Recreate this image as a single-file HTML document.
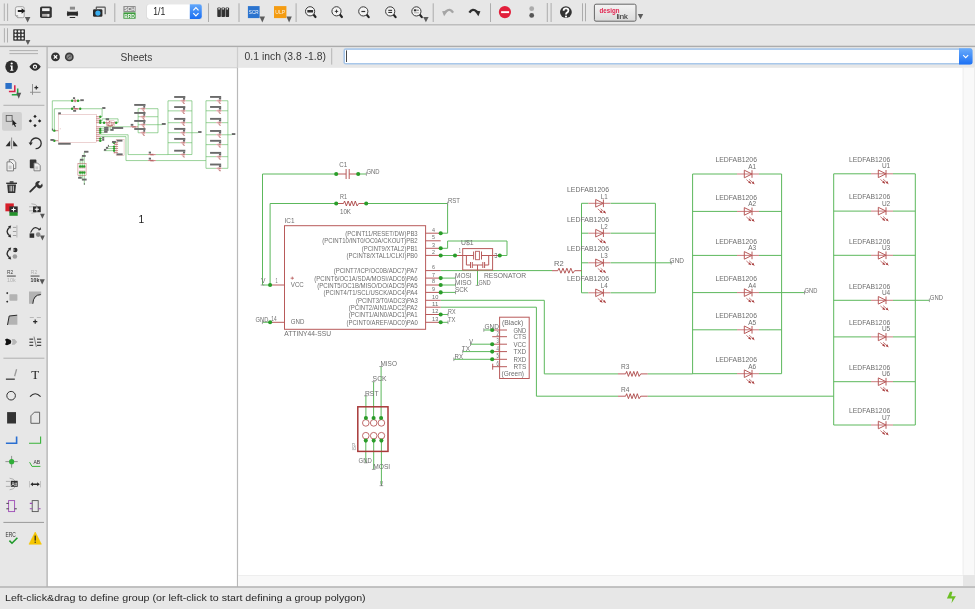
<!DOCTYPE html><html><head><meta charset="utf-8"><style>html,body{margin:0;padding:0;width:975px;height:609px;overflow:hidden;background:#e7e7e7}svg{display:block;font-family:"Liberation Sans",sans-serif;will-change:transform}</style></head><body>
<svg width="975" height="609" viewBox="0 0 975 609">
<rect x="0" y="0" width="975" height="609" fill="#e7e7e7"/>
<rect x="0" y="24.1" width="975" height="1.6" fill="#bababa"/><rect x="0" y="25.7" width="975" height="0.8" fill="#ececec"/>
<rect x="0" y="45.7" width="975" height="1.4" fill="#acacac"/>
<rect x="46.4" y="47" width="1.4" height="540" fill="#b8b8b8"/>
<rect x="48" y="68.2" width="189" height="518" fill="#ffffff"/>
<rect x="48" y="67" width="189" height="1.2" fill="#d8d8d8"/>
<rect x="236.9" y="47" width="1.2" height="21" fill="#cdcdcd"/>
<rect x="236.9" y="68" width="1.3" height="519" fill="#b9b9b9"/>
<rect x="238.2" y="67.8" width="736.8" height="518.5" fill="#ffffff"/>
<rect x="238.2" y="575.4" width="725" height="11" fill="#f8f8f8"/>
<rect x="238.2" y="575" width="725" height="0.9" fill="#ececec"/>
<rect x="963" y="67.8" width="12" height="519" fill="#f9f9f9"/>
<rect x="962.6" y="67.8" width="0.9" height="507" fill="#ebebeb"/>
<rect x="963" y="575" width="12" height="11.3" fill="#e6e6e6"/>
<rect x="974" y="67.8" width="1" height="507" fill="#ececec"/>
<rect x="0" y="586.3" width="975" height="1.4" fill="#b0b0b0"/>
<rect x="3.8" y="3.5" width="1" height="17.5" fill="#b0b0b0"/>
<rect x="7.1" y="3.5" width="1" height="17.5" fill="#b0b0b0"/>
<path d="M17.2 6.7 H22.6 Q24.2 6.7 24.2 8.3 V16.2 Q24.2 17.7 22.7 17.7 H17.7 L15.4 15.5 V8.5 Q15.4 6.7 17.2 6.7 Z" fill="#f3f3f3" stroke="#9a9a9a" stroke-width="0.9"/>
<path d="M15.4 15.5 L17.7 15.5 L17.7 17.7" fill="none" stroke="#9a9a9a" stroke-width="0.8"/>
<path d="M17.8 10.1 H21.6 V8.3 L25.3 11 L21.6 13.7 V11.9 H17.8 Z" fill="#1e1e1e"/>
<path d="M24.9 17.1 H30.4 L27.65 22.6 Z" fill="#5c5c5c"/>
<rect x="40" y="6.4" width="11.8" height="11.6" rx="1.8" fill="#333"/>
<rect x="42.1" y="8.2" width="7.5" height="2.9" fill="#f2f2f2"/>
<rect x="42.1" y="13.9" width="7.5" height="2.7" fill="#b3b0ae"/>
<rect x="47.4" y="14.1" width="1.6" height="2.5" fill="#e4e4e4"/>
<rect x="69.9" y="6.7" width="5.1" height="2.9" fill="#8c8c8c"/>
<path d="M67.4 10.9 Q68.6 11.8 70 11.8 H75 Q76.4 11.8 77.6 10.9 Q78.6 13.6 77.6 16.3 Q76.4 15.4 75 15.4 H70 Q68.6 15.4 67.4 16.3 Q66.4 13.6 67.4 10.9 Z" fill="#2b2b2b"/>
<rect x="69.6" y="16.9" width="5.7" height="1.2" rx="0.5" fill="#2b2b2b"/>
<path d="M96.3 9 V7.6 Q96.3 7.2 96.7 7.2 H104.6 Q105.2 7.2 105.2 7.8 V14.3" fill="none" stroke="#555" stroke-width="1.2"/>
<rect x="93" y="9.2" width="9.4" height="7.6" rx="1.2" fill="#2a2a2a"/>
<circle cx="97.9" cy="13.1" r="2.6" fill="#3aaef0"/>
<rect x="114.3" y="3.3" width="1" height="18.7" fill="#acacac"/>
<rect x="123.4" y="6.1" width="12.2" height="5.8" fill="#858585"/>
<text x="129.5" y="11.2" font-size="6" fill="#fff" text-anchor="middle" font-weight="bold" textLength="10.6" lengthAdjust="spacingAndGlyphs">SCH</text>
<rect x="123.4" y="12.4" width="12.2" height="6.3" fill="#3c9b3c"/>
<text x="129.5" y="17.9" font-size="6" fill="#fff" text-anchor="middle" font-weight="bold" textLength="10.6" lengthAdjust="spacingAndGlyphs">BRD</text>
<rect x="146.6" y="3.9" width="55.5" height="15.4" rx="2.6" fill="#d2d2d2"/>
<rect x="147" y="4.2" width="54.8" height="14.7" rx="2.3" fill="#ffffff"/>
<defs><linearGradient id="blu" x1="0" y1="0" x2="0" y2="1"><stop offset="0" stop-color="#64a8fa"/><stop offset="1" stop-color="#1a6ef2"/></linearGradient></defs>
<path d="M189.8 4.2 H199.5 Q201.8 4.2 201.8 6.5 V16.6 Q201.8 18.9 199.5 18.9 H189.8 Z" fill="url(#blu)"/>
<path d="M193.3 10.4 L195.9 7.7 L198.5 10.4" fill="none" stroke="#fff" stroke-width="1.2"/>
<path d="M193.3 13.1 L195.9 15.8 L198.5 13.1" fill="none" stroke="#fff" stroke-width="1.2"/>
<text x="153.3" y="15.2" font-size="10.8" fill="#1a1a1a" textLength="11.9" lengthAdjust="spacingAndGlyphs">1/1</text>
<rect x="208" y="3.3" width="1" height="18.7" fill="#acacac"/>
<rect x="217.3" y="7.4" width="3.6" height="9.7" rx="1.2" fill="#333"/>
<rect x="218.4" y="8" width="1.4" height="1.6" fill="#ddd"/>
<rect x="221.4" y="7.4" width="3.6" height="9.7" rx="1.2" fill="#333"/>
<rect x="222.5" y="8" width="1.4" height="1.6" fill="#ddd"/>
<rect x="225.5" y="7.4" width="3.6" height="9.7" rx="1.2" fill="#333"/>
<rect x="226.6" y="8" width="1.4" height="1.6" fill="#ddd"/>
<rect x="238.5" y="3.3" width="1" height="18.7" fill="#acacac"/>
<rect x="247.9" y="6.1" width="11.7" height="12" fill="#2b74cf"/>
<text x="253.75" y="14.3" font-size="6" fill="#f2f6fc" text-anchor="middle" textLength="9.8" lengthAdjust="spacingAndGlyphs">SCR</text>
<path d="M259.6 16.6 H265 L262.3 22.4 Z" fill="#5c5c5c"/>
<rect x="274" y="6.1" width="12.4" height="12" fill="#f49c12"/>
<text x="280.2" y="14.3" font-size="6" fill="#fdf0dc" text-anchor="middle" textLength="9.8" lengthAdjust="spacingAndGlyphs">ULP</text>
<path d="M286.4 16.6 H291.8 L289.1 22.4 Z" fill="#5c5c5c"/>
<rect x="295.6" y="3.3" width="1" height="18.7" fill="#acacac"/>
<line x1="313.3" y1="14.3" x2="315.5" y2="17.0" stroke="#252525" stroke-width="2.2" stroke-linecap="round"/>
<circle cx="310.1" cy="11.3" r="4.6" fill="#f4f4f4" stroke="#3a3a3a" stroke-width="1"/>
<rect x="307.3" y="10.1" width="5.8" height="2.5" rx="0.5" fill="#2f2f2f"/>
<line x1="339.7" y1="14.3" x2="341.9" y2="17.0" stroke="#252525" stroke-width="2.2" stroke-linecap="round"/>
<circle cx="336.5" cy="11.3" r="4.6" fill="#f4f4f4" stroke="#3a3a3a" stroke-width="1"/>
<path d="M336.5 9.1 L337.1 10.7 L338.7 11.3 L337.1 11.9 L336.5 13.5 L335.9 11.9 L334.3 11.3 L335.9 10.7 Z" fill="#2f2f2f"/>
<line x1="366.5" y1="14.4" x2="368.7" y2="17.1" stroke="#252525" stroke-width="2.2" stroke-linecap="round"/>
<circle cx="363.3" cy="11.4" r="4.6" fill="#f4f4f4" stroke="#3a3a3a" stroke-width="1"/>
<rect x="361.4" y="10.9" width="3.8" height="1.2" fill="#2f2f2f"/>
<line x1="393.4" y1="14.4" x2="395.59999999999997" y2="17.1" stroke="#252525" stroke-width="2.2" stroke-linecap="round"/>
<circle cx="390.2" cy="11.4" r="4.6" fill="#f4f4f4" stroke="#3a3a3a" stroke-width="1"/>
<rect x="388.3" y="9.8" width="3.8" height="1.1" fill="#2f2f2f"/><rect x="388.3" y="11.9" width="3.8" height="1.1" fill="#2f2f2f"/>
<line x1="419.59999999999997" y1="14.4" x2="421.79999999999995" y2="17.1" stroke="#252525" stroke-width="2.2" stroke-linecap="round"/>
<circle cx="416.4" cy="11.4" r="4.6" fill="#f4f4f4" stroke="#3a3a3a" stroke-width="1"/>
<rect x="413.9" y="9.3" width="2.4" height="2" fill="#2f2f2f"/><rect x="416.5" y="9.6" width="2.4" height="1.3" fill="#8a8a8a"/><rect x="413.9" y="12.5" width="5" height="0.7" fill="#8a8a8a"/>
<path d="M423.2 16.9 H428.6 L425.9 22.3 Z" fill="#5c5c5c"/>
<rect x="432.7" y="3.3" width="1" height="18.7" fill="#acacac"/>
<path d="M469.4 12.6 Q472.4 7.6 476.8 11.6" fill="none" stroke="#2e2e2e" stroke-width="2.3"/>
<path d="M474.4 10.6 L480.4 11.2 L478.4 16.2 Z" fill="#2e2e2e"/>
<path d="M453.1 12.6 Q450.1 7.6 445.7 11.6" fill="none" stroke="#a5a5a5" stroke-width="2.3"/>
<path d="M448.1 10.6 L442.1 11.2 L444.1 16.2 Z" fill="#a5a5a5"/>
<rect x="490" y="3.3" width="1" height="18.7" fill="#acacac"/>
<circle cx="504.9" cy="12.1" r="6.1" fill="#e21f3b"/>
<rect x="501.1" y="11.2" width="8" height="1.9" fill="#fff"/>
<circle cx="531.7" cy="8.7" r="2.4" fill="#ababab"/>
<circle cx="531.7" cy="15.4" r="2.4" fill="#555"/>
<rect x="546.8" y="3" width="1" height="19" fill="#acacac"/>
<rect x="550.6" y="3" width="1" height="19" fill="#acacac"/>
<circle cx="565.9" cy="12.1" r="5.9" fill="#333"/>
<path d="M563.6 10.7 Q563.6 8.4 566 8.4 Q568.4 8.4 568.4 10.5 Q568.4 11.9 567 12.6 Q566 13.1 566 14.5" fill="none" stroke="#fff" stroke-width="1.8"/>
<circle cx="566" cy="16.6" r="1.05" fill="#fff"/>
<rect x="582" y="3.3" width="1" height="18" fill="#acacac"/>
<rect x="585" y="3.3" width="1" height="18" fill="#acacac"/>
<defs><linearGradient id="dl" x1="0" y1="0" x2="0" y2="1"><stop offset="0" stop-color="#f4f4f4"/><stop offset="1" stop-color="#dadada"/></linearGradient></defs>
<rect x="594.4" y="4.2" width="41.6" height="17" rx="1.6" fill="url(#dl)" stroke="#666" stroke-width="1"/>
<text x="599.6" y="13.4" font-size="8" font-weight="bold" fill="#e2234f" textLength="19.8" lengthAdjust="spacingAndGlyphs">design</text>
<text x="616.4" y="19.2" font-size="7" fill="#151515" textLength="11.6" lengthAdjust="spacingAndGlyphs">link</text>
<path d="M637.8 14 H643.2 L640.5 19.3 Z" fill="#5c5c5c"/>
<rect x="3.9" y="28.2" width="1" height="14.3" fill="#b0b0b0"/>
<rect x="7" y="28.2" width="1" height="14.3" fill="#b0b0b0"/>
<rect x="13.2" y="29.2" width="11.8" height="11.5" rx="0.6" fill="#3a3a3a"/>
<circle cx="15.6" cy="31.5" r="1.15" fill="#f4f4f4"/>
<circle cx="15.6" cy="35" r="1.15" fill="#f4f4f4"/>
<circle cx="15.6" cy="38.4" r="1.15" fill="#f4f4f4"/>
<circle cx="19.1" cy="31.5" r="1.15" fill="#f4f4f4"/>
<circle cx="19.1" cy="35" r="1.15" fill="#f4f4f4"/>
<circle cx="19.1" cy="38.4" r="1.15" fill="#f4f4f4"/>
<circle cx="22.6" cy="31.5" r="1.15" fill="#f4f4f4"/>
<circle cx="22.6" cy="35" r="1.15" fill="#f4f4f4"/>
<circle cx="22.6" cy="38.4" r="1.15" fill="#f4f4f4"/>
<path d="M25.4 40 H30.4 L27.9 45 Z" fill="#5c5c5c"/>
<rect x="9.4" y="50.2" width="28.6" height="0.9" fill="#a8a8a8"/>
<rect x="9.4" y="53.2" width="28.6" height="0.9" fill="#a8a8a8"/>
<circle cx="11.6" cy="66.8" r="6.3" fill="#2e2e2e"/>
<circle cx="11.7" cy="63.5" r="1.1" fill="#fff"/>
<path d="M10.2 65.6 H12.6 V69.8 H13.4 V70.8 H10.2 V69.8 H11 V66.6 H10.2 Z" fill="#fff"/>
<path d="M29.4 66.7 Q35 58.7 40.8 66.7 Q35 74.7 29.4 66.7 Z" fill="#2e2e2e"/>
<circle cx="35" cy="66.7" r="2.1" fill="#fff"/>
<circle cx="35" cy="66.7" r="1.0" fill="#2e2e2e"/>
<path d="M8.9 91.5 H14.8 V85.2" fill="none" stroke="#d9204a" stroke-width="1.5"/>
<path d="M11.8 94.8 H17.7 V88.4" fill="none" stroke="#23a843" stroke-width="1.5"/>
<rect x="5.4" y="83" width="6.4" height="5.9" fill="#2a70c8"/>
<path d="M16.3 92.8 H21.2 L18.75 98.7 Z" fill="#555"/>
<rect x="32.1" y="84" width="0.9" height="10.8" fill="#8a8a8a"/>
<rect x="30" y="91.8" width="10.6" height="0.9" fill="#8a8a8a"/>
<path d="M36.3 85.8 V89.6 M34.4 87.7 H38.2" stroke="#2e2e2e" stroke-width="1.2"/>
<rect x="3.4" y="104.8" width="41" height="1" fill="#b0b0b0"/>
<rect x="2" y="112.1" width="19.9" height="18.7" rx="2" fill="#d1d1d1"/>
<rect x="6.2" y="115.5" width="5.9" height="5.8" fill="none" stroke="#555" stroke-width="0.8"/>
<path d="M12.4 119.6 L12.4 125.6 L13.8 124.4 L15 127 L16 126.5 L14.9 124 L16.8 123.9 Z" fill="#1e1e1e"/>
<path d="M35 114.7 l1.7 1.7 l-1.7 1.7 l-1.7 -1.7 Z" fill="#222"/>
<path d="M30.4 119.2 l1.7 1.7 l-1.7 1.7 l-1.7 -1.7 Z" fill="#222"/>
<path d="M39.6 119.2 l1.7 1.7 l-1.7 1.7 l-1.7 -1.7 Z" fill="#222"/>
<path d="M35 123.89999999999999 l1.7 1.7 l-1.7 1.7 l-1.7 -1.7 Z" fill="#222"/>
<rect x="11.3" y="137.5" width="0.8" height="11.4" fill="#777"/>
<path d="M10.2 140.5 V146.3 H5.6 Z" fill="#2e2e2e"/>
<path d="M13.2 140.5 V146.3 H17.8 Z" fill="#2e2e2e"/>
<path d="M30.6 143.6 A5.3 5.3 0 1 1 35.6 148.6" fill="none" stroke="#2e2e2e" stroke-width="1.3"/>
<path d="M28.6 142.6 L32.8 142.6 L30.7 145.6 Z" fill="#2e2e2e"/>
<path d="M9.3 159.6 H13.2 L15.8 162.2 V168.6 H9.3 Z" fill="#f0f0f0" stroke="#777" stroke-width="0.9"/>
<path d="M7 161.9 H10.9 L13.5 164.5 V170.9 H7 Z" fill="#f0f0f0" stroke="#777" stroke-width="0.9"/>
<rect x="8.6" y="165.6" width="3" height="3.4" fill="#c8c8c8"/>
<rect x="29.8" y="159.6" width="6.6" height="8.6" rx="0.8" fill="#333"/>
<path d="M34 163 H37.6 L40.2 165.6 V170.8 H34 Z" fill="#f0f0f0" stroke="#777" stroke-width="0.9"/>
<rect x="35.4" y="166.4" width="2.8" height="3" fill="#c8c8c8"/>
<rect x="6.2" y="182.6" width="10.8" height="1.4" fill="#333"/>
<rect x="9.6" y="181.2" width="4" height="1.5" rx="0.5" fill="#333"/>
<path d="M7.2 184.5 H16 L15.2 193 H8 Z" fill="#333"/>
<rect x="9.7" y="185.8" width="0.8" height="5.6" fill="#e7e7e7"/>
<rect x="11.3" y="185.8" width="0.8" height="5.6" fill="#e7e7e7"/>
<rect x="12.9" y="185.8" width="0.8" height="5.6" fill="#e7e7e7"/>
<path d="M30.2 191.6 L36 185.8" stroke="#333" stroke-width="1.9" stroke-linecap="round"/>
<path d="M35.2 184.2 A3.2 3.2 0 0 1 40.2 181.6 L38.3 183.6 L38.9 185.1 L40.4 185.6 L42.2 183.6 A3.2 3.2 0 0 1 37.6 187.8 Z" fill="#333"/>
<rect x="5.4" y="203.4" width="8.4" height="7.9" fill="#d71f2a"/>
<rect x="9.4" y="206.4" width="8.3" height="6.4" fill="#2e2e2e"/>
<rect x="9.4" y="212.3" width="8.3" height="3.5" fill="#23922b"/>
<path d="M13.55 207.4 V211.6 M11.45 209.5 H15.65" stroke="#fff" stroke-width="1.1"/>
<path d="M31.4 203.8 Q36 204 37.2 206" fill="none" stroke="#999" stroke-width="0.7"/>
<path d="M31.4 213.2 Q36 213 37.2 211" fill="none" stroke="#999" stroke-width="0.7"/>
<path d="M29 206.8 H33 M29 210.8 H33" stroke="#999" stroke-width="0.7"/>
<rect x="33" y="206.4" width="7.8" height="5.8" fill="#2e2e2e"/>
<path d="M36.9 207.2 V211.4 M34.8 209.3 H39" stroke="#fff" stroke-width="1.1"/>
<path d="M40 213.8 H44.8 L42.4 218.7 Z" fill="#555"/>
<path d="M9.6 227.2 Q4.6 231.5 9.6 235.8" fill="none" stroke="#2e2e2e" stroke-width="1.4"/>
<path d="M11.2 225.6 L8 226.3 L10.4 228.8 Z M11.2 237.4 L8 236.7 L10.4 234.2 Z" fill="#2e2e2e"/>
<rect x="16.4" y="225.3" width="1" height="12.2" fill="#b5b5b5"/>
<rect x="12.9" y="226.9" width="3.4" height="0.9" fill="#9a9a9a"/>
<rect x="12.9" y="231.1" width="3.4" height="0.9" fill="#9a9a9a"/>
<rect x="12.9" y="235.1" width="3.4" height="0.9" fill="#9a9a9a"/>
<path d="M30.6 232.6 Q34.2 224.2 39.8 230" fill="none" stroke="#2e2e2e" stroke-width="1.1"/>
<path d="M38.2 230.6 L41.2 229.6 L40.4 227.2 Z" fill="#2e2e2e"/>
<rect x="29.6" y="233.4" width="4.6" height="4.4" fill="#2e2e2e"/>
<circle cx="38.2" cy="234.6" r="2.3" fill="#8a8a8a"/>
<path d="M40 235.5 H44.8 L42.4 240.4 Z" fill="#555"/>
<path d="M9.6 249.2 Q4.6 253.5 9.6 257.8" fill="none" stroke="#2e2e2e" stroke-width="1.4"/>
<path d="M11.2 247.6 L8 248.3 L10.4 250.8 Z M11.2 259.4 L8 258.7 L10.4 256.2 Z" fill="#2e2e2e"/>
<circle cx="15.2" cy="250" r="2.3" fill="#2e2e2e"/>
<circle cx="14.9" cy="256.5" r="2.3" fill="#9c9c9c"/>
<rect x="12.4" y="249.5" width="2.2" height="1" fill="#e7e7e7"/>
<text x="6.9" y="274.4" font-size="5.6" fill="#444" textLength="6.2" lengthAdjust="spacingAndGlyphs">R2</text>
<rect x="6.9" y="275.6" width="8.9" height="0.9" fill="#333"/>
<text x="6.9" y="281.8" font-size="5.6" fill="#b0b0b0" textLength="8.7" lengthAdjust="spacingAndGlyphs">10k</text>
<text x="30.8" y="274.4" font-size="5.6" fill="#b0b0b0" textLength="6.4" lengthAdjust="spacingAndGlyphs">R2</text>
<rect x="30.6" y="275.6" width="8.9" height="0.9" fill="#333"/>
<text x="30.6" y="281.8" font-size="5.6" fill="#333" font-weight="bold" textLength="8.7" lengthAdjust="spacingAndGlyphs">10k</text>
<path d="M39.6 279.2 H44.8 L42.2 284.6 Z" fill="#555"/>
<path d="M7.2 292 L8.3 293.1 L7.2 294.2 L6.1 293.1 Z M7.2 300.6 L8.3 301.7 L7.2 302.8 L6.1 301.7 Z" fill="#1e1e1e"/>
<rect x="9.4" y="294.3" width="8" height="6.4" rx="0.6" fill="#b3b3b3"/>
<path d="M29 291.6 H41.2 V295 Q34 294.6 32.6 303.8 H29 Z" fill="#b3b3b3"/>
<path d="M40.8 294.6 Q33.4 294.6 32.8 303.8" fill="none" stroke="#2a2a2a" stroke-width="1"/>
<path d="M7.6 324.8 L9.2 316 L17.4 315.4 V324.8 Z" fill="#b3b3b3"/>
<path d="M7.5 325 L9.2 316 L17.2 315.2" fill="none" stroke="#2a2a2a" stroke-width="1"/>
<rect x="29.8" y="317" width="4" height="1" fill="#b8b8b8"/>
<rect x="36.8" y="317" width="4" height="1" fill="#b8b8b8"/>
<path d="M35.2 319.6 V323.8 M33.1 321.7 H37.3" stroke="#2a2a2a" stroke-width="1.2"/>
<path d="M5 339.4 L7 338.6 L10.6 340 Q12 341.8 10.6 343.8 L7 345.2 L5 344.4 L6.2 341.9 Z" fill="#111"/>
<path d="M11.8 339 L14.6 339 L17.2 341.9 L14.6 344.8 L11.8 344.8 Q13.2 341.9 11.8 339 Z" fill="#b8b8b8"/>
<rect x="29.4" y="338.6" width="3.8" height="1.1" fill="#333"/>
<rect x="37" y="338.6" width="4.2" height="1.1" fill="#333"/>
<rect x="29.4" y="341.7" width="3.8" height="1.1" fill="#333"/>
<rect x="37" y="341.7" width="4.2" height="1.1" fill="#333"/>
<rect x="29.4" y="344.8" width="3.8" height="1.1" fill="#333"/>
<rect x="37" y="344.8" width="4.2" height="1.1" fill="#333"/>
<line x1="34" y1="336.6" x2="36.4" y2="347" stroke="#555" stroke-width="0.7"/>
<rect x="3.4" y="357.7" width="41" height="1" fill="#b0b0b0"/>
<rect x="5.9" y="378.6" width="8.9" height="1.1" fill="#1e1e1e"/>
<line x1="14.6" y1="376.2" x2="16.6" y2="369.2" stroke="#9a9a9a" stroke-width="1.3"/>
<text x="35.2" y="378.8" font-size="13" font-family="Liberation Serif" fill="#1e1e1e" text-anchor="middle">T</text>
<circle cx="11.1" cy="395.7" r="4.3" fill="none" stroke="#333" stroke-width="1"/>
<path d="M30 396.6 Q35.2 390.8 40.6 396.6" fill="none" stroke="#2e2e2e" stroke-width="1.1"/>
<rect x="7.1" y="412.1" width="8.9" height="11.4" fill="#333"/>
<path d="M30.9 423.3 V415.8 L34.4 412.2 H39.6 V423.3 Z" fill="none" stroke="#555" stroke-width="0.9"/>
<path d="M5.9 443.2 H16.6 V436.6" fill="none" stroke="#2a6fd1" stroke-width="1.6"/>
<path d="M29 443.2 H40.6 V436.6" fill="none" stroke="#38b43a" stroke-width="1.1"/>
<rect x="5.4" y="461.2" width="12.3" height="0.9" fill="#888"/>
<rect x="11.2" y="455.9" width="0.9" height="11.8" fill="#888"/>
<circle cx="11.65" cy="461.7" r="2.6" fill="#2fae37"/>
<path d="M29.6 462.2 L32 466.4 H40.4" fill="none" stroke="#38b43a" stroke-width="1"/>
<text x="33.4" y="464.2" font-size="5" fill="#333" textLength="6.8" lengthAdjust="spacingAndGlyphs">AB</text>
<path d="M9.6 478.2 Q14 478.6 15.4 481.4 M9.6 489.8 Q14 489.4 15.4 486.6" fill="none" stroke="#999" stroke-width="0.7"/>
<path d="M5.9 481.4 H10 M5.9 486.4 H10" stroke="#999" stroke-width="0.7"/>
<rect x="10.8" y="480.8" width="6.9" height="6" fill="#2e2e2e"/>
<text x="11.4" y="485.9" font-size="5" fill="#fff" textLength="5.6" lengthAdjust="spacingAndGlyphs">Att</text>
<rect x="29.2" y="481" width="0.6" height="6.4" fill="#aaa"/>
<rect x="40.3" y="481" width="0.6" height="6.4" fill="#aaa"/>
<path d="M30.4 484.2 L33 482.2 V483.5 H37.2 V482.2 L39.8 484.2 L37.2 486.2 V484.9 H33 V486.2 Z" fill="#2a2a2a"/>
<rect x="8.6" y="500.6" width="6" height="11" fill="none" stroke="#9d4bb5" stroke-width="0.9"/>
<path d="M6.4 503.4 H8.6 M6.4 508.8 H8.6 M14.6 508.8 H16.8" stroke="#333" stroke-width="0.9"/>
<rect x="32.2" y="500.6" width="6" height="11" fill="none" stroke="#555" stroke-width="0.9"/>
<path d="M29.8 503.4 H32.2 M29.8 508.8 H32.2 M38.2 508.8 H40.6" stroke="#9d4bb5" stroke-width="1.1"/>
<rect x="3.4" y="521.9" width="40.6" height="1" fill="#9a9a9a"/>
<text x="5.4" y="537.4" font-size="6.4" fill="#333" textLength="10.4" lengthAdjust="spacingAndGlyphs">ERC</text>
<path d="M9.4 540.6 L12 543.2 L17.4 537.8" fill="none" stroke="#1f9a2a" stroke-width="1.6"/>
<path d="M35.2 532 L41.4 544.2 H29 Z" fill="#f6c600" stroke="#f6c600" stroke-width="0.6" stroke-linejoin="round"/>
<rect x="34.6" y="535.6" width="1.2" height="5" fill="#222"/>
<rect x="34.6" y="541.6" width="1.2" height="1.2" fill="#222"/>
<circle cx="55.5" cy="56.9" r="4.4" fill="#333"/>
<path d="M53.8 55.2 L57.2 58.6 M57.2 55.2 L53.8 58.6" stroke="#fff" stroke-width="1.3"/>
<circle cx="69.3" cy="56.9" r="4.4" fill="#3a3a3a"/>
<circle cx="69.3" cy="57" r="2.8" fill="#8a8a8a"/>
<path d="M67.4 58.6 L69.6 56 H71.2" fill="none" stroke="#3a3a3a" stroke-width="0.8"/>
<text x="120.5" y="61.0" font-size="10.3" fill="#3a3a3a" textLength="31.8" lengthAdjust="spacingAndGlyphs">Sheets</text>
<text x="138.6" y="222.7" font-size="10.2" fill="#1e1e1e">1</text>
<text x="244.6" y="60.3" font-size="10.1" fill="#3a3a3a" textLength="81.3" lengthAdjust="spacingAndGlyphs">0.1 inch (3.8 -1.8)</text>
<rect x="331.2" y="48.2" width="1" height="16.4" fill="#b5b5b5"/>
<rect x="343.4" y="48.3" width="629" height="16.3" rx="2.4" fill="#a8c7ea"/>
<rect x="345" y="49.9" width="614" height="13.1" fill="#ffffff"/>
<defs><linearGradient id="blu2" x1="0" y1="0" x2="0" y2="1"><stop offset="0" stop-color="#6aacfb"/><stop offset="1" stop-color="#1c70f4"/></linearGradient></defs>
<path d="M959 48.3 H970 Q972.5 48.3 972.5 50.8 V62.1 Q972.5 64.6 970 64.6 H959 Z" fill="url(#blu2)"/>
<path d="M963.2 55.1 L965.7 57.6 L968.2 55.1" fill="none" stroke="#fff" stroke-width="1.1"/>
<rect x="346.1" y="50.4" width="0.9" height="11.6" fill="#333"/>
<text x="5" y="600.9" font-size="9.9" fill="#262626" textLength="360.6" lengthAdjust="spacingAndGlyphs">Left-click&amp;drag to define group (or left-click to start defining a group polygon)</text>
<path d="M950 591.8 L952.4 591.8 L951.3 596.2 L955.9 596.2 L951.5 603.2 L952.3 598.4 L946.9 598.4 Z" fill="#6cbf24"/>
<polyline points="262.5,285 262.5,174 336.2,174" fill="none" stroke="#5cb85c" stroke-width="1"/>
<polyline points="358.2,174 366.4,174" fill="none" stroke="#5cb85c" stroke-width="1"/>
<polyline points="270.1,285 270.1,203.5 336.2,203.5" fill="none" stroke="#5cb85c" stroke-width="1"/>
<polyline points="366.2,203.5 447.6,203.5 447.6,233.2 440.7,233.2" fill="none" stroke="#5cb85c" stroke-width="1"/>
<polyline points="262.5,285 270.1,285" fill="none" stroke="#5cb85c" stroke-width="1"/>
<polyline points="262.4,322.3 270.1,322.3" fill="none" stroke="#5cb85c" stroke-width="1"/>
<polyline points="440.7,248.3 447.6,248.3 447.6,241 507,241 507,255.5 499.8,255.5" fill="none" stroke="#5cb85c" stroke-width="1"/>
<polyline points="440.7,255.5 455,255.5" fill="none" stroke="#5cb85c" stroke-width="1"/>
<polyline points="440.7,270.6 552,270.6" fill="none" stroke="#5cb85c" stroke-width="1"/>
<polyline points="440.7,278.1 455.5,278.1" fill="none" stroke="#5cb85c" stroke-width="1"/>
<polyline points="440.7,285 455.5,285" fill="none" stroke="#5cb85c" stroke-width="1"/>
<polyline points="440.7,292.4 455.5,292.4" fill="none" stroke="#5cb85c" stroke-width="1"/>
<polyline points="440.7,300.3 544.3,300.3 544.3,373.9 618,373.9" fill="none" stroke="#5cb85c" stroke-width="1"/>
<polyline points="440.7,307.2 536.4,307.2 536.4,396.2 618,396.2" fill="none" stroke="#5cb85c" stroke-width="1"/>
<polyline points="440.7,314.5 448,314.5" fill="none" stroke="#5cb85c" stroke-width="1"/>
<polyline points="440.7,322.3 448,322.3" fill="none" stroke="#5cb85c" stroke-width="1"/>
<polyline points="477.5,270 477.5,285.4" fill="none" stroke="#5cb85c" stroke-width="1"/>
<polyline points="483.8,330 492.2,330" fill="none" stroke="#5cb85c" stroke-width="1"/>
<polyline points="470.5,344.2 492.2,344.2" fill="none" stroke="#5cb85c" stroke-width="1"/>
<polyline points="462.7,351.6 492.2,351.6" fill="none" stroke="#5cb85c" stroke-width="1"/>
<polyline points="453.8,359.3 492.2,359.3" fill="none" stroke="#5cb85c" stroke-width="1"/>
<polyline points="647.7,373.9 692.6,373.9" fill="none" stroke="#5cb85c" stroke-width="1"/>
<polyline points="647.7,396.2 833.7,396.2" fill="none" stroke="#5cb85c" stroke-width="1"/>
<polyline points="581.5,203.3 581.5,292.8" fill="none" stroke="#5cb85c" stroke-width="1"/>
<polyline points="655.4,203.3 655.4,292.8" fill="none" stroke="#5cb85c" stroke-width="1"/>
<polyline points="581.5,203.3 588.4,203.3" fill="none" stroke="#5cb85c" stroke-width="1"/>
<polyline points="610.5,203.3 655.4,203.3" fill="none" stroke="#5cb85c" stroke-width="1"/>
<polyline points="581.5,233.2 588.4,233.2" fill="none" stroke="#5cb85c" stroke-width="1"/>
<polyline points="610.5,233.2 655.4,233.2" fill="none" stroke="#5cb85c" stroke-width="1"/>
<polyline points="581.5,262.8 588.4,262.8" fill="none" stroke="#5cb85c" stroke-width="1"/>
<polyline points="610.5,262.8 655.4,262.8" fill="none" stroke="#5cb85c" stroke-width="1"/>
<polyline points="581.5,292.8 588.4,292.8" fill="none" stroke="#5cb85c" stroke-width="1"/>
<polyline points="610.5,292.8 655.4,292.8" fill="none" stroke="#5cb85c" stroke-width="1"/>
<polyline points="655.4,262.8 671.2,262.8" fill="none" stroke="#5cb85c" stroke-width="1"/>
<polyline points="692.6,174 692.6,373.9" fill="none" stroke="#5cb85c" stroke-width="1"/>
<polyline points="781.6,174 781.6,373.7" fill="none" stroke="#5cb85c" stroke-width="1"/>
<polyline points="692.6,174 737,174" fill="none" stroke="#5cb85c" stroke-width="1"/>
<polyline points="759,174 781.6,174" fill="none" stroke="#5cb85c" stroke-width="1"/>
<polyline points="692.6,211.4 737,211.4" fill="none" stroke="#5cb85c" stroke-width="1"/>
<polyline points="759,211.4 781.6,211.4" fill="none" stroke="#5cb85c" stroke-width="1"/>
<polyline points="692.6,255.4 737,255.4" fill="none" stroke="#5cb85c" stroke-width="1"/>
<polyline points="759,255.4 781.6,255.4" fill="none" stroke="#5cb85c" stroke-width="1"/>
<polyline points="692.6,292.6 737,292.6" fill="none" stroke="#5cb85c" stroke-width="1"/>
<polyline points="759,292.6 781.6,292.6" fill="none" stroke="#5cb85c" stroke-width="1"/>
<polyline points="692.6,329.8 737,329.8" fill="none" stroke="#5cb85c" stroke-width="1"/>
<polyline points="759,329.8 781.6,329.8" fill="none" stroke="#5cb85c" stroke-width="1"/>
<polyline points="692.6,373.7 737,373.7" fill="none" stroke="#5cb85c" stroke-width="1"/>
<polyline points="759,373.7 781.6,373.7" fill="none" stroke="#5cb85c" stroke-width="1"/>
<polyline points="781.6,292.6 804.5,292.6" fill="none" stroke="#5cb85c" stroke-width="1"/>
<polyline points="833.7,173.8 833.7,425" fill="none" stroke="#5cb85c" stroke-width="1"/>
<polyline points="915.3,173.8 915.3,425" fill="none" stroke="#5cb85c" stroke-width="1"/>
<polyline points="833.7,173.8 871,173.8" fill="none" stroke="#5cb85c" stroke-width="1"/>
<polyline points="893,173.8 915.3,173.8" fill="none" stroke="#5cb85c" stroke-width="1"/>
<polyline points="833.7,211.1 871,211.1" fill="none" stroke="#5cb85c" stroke-width="1"/>
<polyline points="893,211.1 915.3,211.1" fill="none" stroke="#5cb85c" stroke-width="1"/>
<polyline points="833.7,255.3 871,255.3" fill="none" stroke="#5cb85c" stroke-width="1"/>
<polyline points="893,255.3 915.3,255.3" fill="none" stroke="#5cb85c" stroke-width="1"/>
<polyline points="833.7,300.3 871,300.3" fill="none" stroke="#5cb85c" stroke-width="1"/>
<polyline points="893,300.3 915.3,300.3" fill="none" stroke="#5cb85c" stroke-width="1"/>
<polyline points="833.7,336.9 871,336.9" fill="none" stroke="#5cb85c" stroke-width="1"/>
<polyline points="893,336.9 915.3,336.9" fill="none" stroke="#5cb85c" stroke-width="1"/>
<polyline points="833.7,381.7 871,381.7" fill="none" stroke="#5cb85c" stroke-width="1"/>
<polyline points="893,381.7 915.3,381.7" fill="none" stroke="#5cb85c" stroke-width="1"/>
<polyline points="833.7,425 871,425" fill="none" stroke="#5cb85c" stroke-width="1"/>
<polyline points="893,425 915.3,425" fill="none" stroke="#5cb85c" stroke-width="1"/>
<polyline points="915.3,300.3 929.4,300.3" fill="none" stroke="#5cb85c" stroke-width="1"/>
<polyline points="365.9,395.8 365.9,418" fill="none" stroke="#5cb85c" stroke-width="1"/>
<polyline points="373.6,381.7 373.6,418" fill="none" stroke="#5cb85c" stroke-width="1"/>
<polyline points="381.1,366.5 381.1,418" fill="none" stroke="#5cb85c" stroke-width="1"/>
<polyline points="365.8,440.6 365.8,462.8" fill="none" stroke="#5cb85c" stroke-width="1"/>
<polyline points="373.7,440.6 373.7,469.4" fill="none" stroke="#5cb85c" stroke-width="1"/>
<polyline points="381.4,440.6 381.4,485.7" fill="none" stroke="#5cb85c" stroke-width="1"/>
<line x1="336.2" y1="174" x2="346.1" y2="174" stroke="#b85a5a" stroke-width="1"/>
<line x1="346.1" y1="169" x2="346.1" y2="179" stroke="#b85a5a" stroke-width="1"/>
<line x1="349.2" y1="169" x2="349.2" y2="179" stroke="#b85a5a" stroke-width="1"/>
<line x1="349.2" y1="174" x2="358.2" y2="174" stroke="#b85a5a" stroke-width="1"/>
<line x1="336.2" y1="203.5" x2="343.5" y2="203.5" stroke="#b85a5a" stroke-width="1"/>
<line x1="358.7" y1="203.5" x2="366.2" y2="203.5" stroke="#b85a5a" stroke-width="1"/>
<polyline points="343.5,203.5 344.57,201 346.36,206 348.15,201 349.94,206 351.73,201 353.51,206 355.3,201 357.09,206 358.7,203.5" fill="none" stroke="#ab4646" stroke-width="0.9"/>
<rect x="284.5" y="225.7" width="141.1" height="103.6" fill="none" stroke="#b85a5a" stroke-width="1"/>
<line x1="270.1" y1="285" x2="284.5" y2="285" stroke="#b85a5a" stroke-width="1"/>
<line x1="270.1" y1="322.3" x2="284.5" y2="322.3" stroke="#b85a5a" stroke-width="1"/>
<path d="M290.6 278.2 H294 M292.3 276.6 V279.6" stroke="#b85a5a" stroke-width="0.8"/>
<line x1="425.6" y1="233.2" x2="440.7" y2="233.2" stroke="#b85a5a" stroke-width="1"/>
<line x1="425.6" y1="240.8" x2="440.7" y2="240.8" stroke="#b85a5a" stroke-width="1"/>
<line x1="425.6" y1="248.3" x2="440.7" y2="248.3" stroke="#b85a5a" stroke-width="1"/>
<line x1="425.6" y1="255.4" x2="440.7" y2="255.4" stroke="#b85a5a" stroke-width="1"/>
<line x1="425.6" y1="270.6" x2="440.7" y2="270.6" stroke="#b85a5a" stroke-width="1"/>
<line x1="425.6" y1="278.1" x2="440.7" y2="278.1" stroke="#b85a5a" stroke-width="1"/>
<line x1="425.6" y1="285" x2="440.7" y2="285" stroke="#b85a5a" stroke-width="1"/>
<line x1="425.6" y1="292.4" x2="440.7" y2="292.4" stroke="#b85a5a" stroke-width="1"/>
<line x1="425.6" y1="300.3" x2="440.7" y2="300.3" stroke="#b85a5a" stroke-width="1"/>
<line x1="425.6" y1="307.2" x2="440.7" y2="307.2" stroke="#b85a5a" stroke-width="1"/>
<line x1="425.6" y1="314.5" x2="440.7" y2="314.5" stroke="#b85a5a" stroke-width="1"/>
<line x1="425.6" y1="322.3" x2="440.7" y2="322.3" stroke="#b85a5a" stroke-width="1"/>
<rect x="462.7" y="248.6" width="29.9" height="21.4" fill="none" stroke="#b85a5a" stroke-width="1"/>
<line x1="455" y1="255.5" x2="473.6" y2="255.5" stroke="#b85a5a" stroke-width="1"/>
<line x1="481.5" y1="255.5" x2="499.8" y2="255.5" stroke="#b85a5a" stroke-width="1"/>
<line x1="473.6" y1="251.5" x2="473.6" y2="259.5" stroke="#b85a5a" stroke-width="1"/>
<line x1="481.5" y1="251.5" x2="481.5" y2="259.5" stroke="#b85a5a" stroke-width="1"/>
<rect x="475.6" y="251.3" width="3.8" height="8.4" fill="none" stroke="#b85a5a" stroke-width="0.9"/>
<polyline points="466.4,255.5 466.4,265 470.5,265" fill="none" stroke="#b85a5a" stroke-width="1"/>
<polyline points="488.7,255.5 488.7,265 484.6,265" fill="none" stroke="#b85a5a" stroke-width="1"/>
<line x1="470.5" y1="262" x2="470.5" y2="268" stroke="#b85a5a" stroke-width="1"/>
<line x1="472.3" y1="262" x2="472.3" y2="268" stroke="#b85a5a" stroke-width="1"/>
<line x1="482.8" y1="262" x2="482.8" y2="268" stroke="#b85a5a" stroke-width="1"/>
<line x1="484.6" y1="262" x2="484.6" y2="268" stroke="#b85a5a" stroke-width="1"/>
<line x1="472.3" y1="265" x2="482.8" y2="265" stroke="#b85a5a" stroke-width="1"/>
<line x1="477.5" y1="265" x2="477.5" y2="271" stroke="#b85a5a" stroke-width="1"/>
<rect x="499.6" y="317.2" width="29.6" height="61.3" fill="none" stroke="#b85a5a" stroke-width="1"/>
<line x1="492.2" y1="330" x2="507" y2="330" stroke="#b85a5a" stroke-width="1"/>
<line x1="492.2" y1="336.7" x2="507" y2="336.7" stroke="#b85a5a" stroke-width="1"/>
<line x1="492.2" y1="344.2" x2="507" y2="344.2" stroke="#b85a5a" stroke-width="1"/>
<line x1="492.2" y1="351.6" x2="507" y2="351.6" stroke="#b85a5a" stroke-width="1"/>
<line x1="492.2" y1="359.3" x2="507" y2="359.3" stroke="#b85a5a" stroke-width="1"/>
<line x1="492.2" y1="366.7" x2="507" y2="366.7" stroke="#b85a5a" stroke-width="1"/>
<line x1="492.7" y1="363.7" x2="492.7" y2="369.7" stroke="#b85a5a" stroke-width="1"/>
<line x1="552" y1="270.7" x2="557.8" y2="270.7" stroke="#b85a5a" stroke-width="1"/>
<line x1="574.6" y1="270.7" x2="581.5" y2="270.7" stroke="#b85a5a" stroke-width="1"/>
<polyline points="557.8,270.7 558.99,268.2 560.96,273.2 562.94,268.2 564.92,273.2 566.89,268.2 568.87,273.2 570.84,268.2 572.82,273.2 574.6,270.7" fill="none" stroke="#ab4646" stroke-width="0.9"/>
<line x1="618" y1="373.9" x2="625.6" y2="373.9" stroke="#b85a5a" stroke-width="1"/>
<line x1="640.7" y1="373.9" x2="647.7" y2="373.9" stroke="#b85a5a" stroke-width="1"/>
<polyline points="625.6,373.9 626.67,371.4 628.44,376.4 630.22,371.4 632,376.4 633.77,371.4 635.55,376.4 637.32,371.4 639.1,376.4 640.7,373.9" fill="none" stroke="#ab4646" stroke-width="0.9"/>
<line x1="618" y1="396.2" x2="625.6" y2="396.2" stroke="#b85a5a" stroke-width="1"/>
<line x1="640.7" y1="396.2" x2="647.7" y2="396.2" stroke="#b85a5a" stroke-width="1"/>
<polyline points="625.6,396.2 626.67,393.7 628.44,398.7 630.22,393.7 632,398.7 633.77,393.7 635.55,398.7 637.32,393.7 639.1,398.7 640.7,396.2" fill="none" stroke="#ab4646" stroke-width="0.9"/>
<line x1="588.4" y1="203.3" x2="610.4" y2="203.3" stroke="#c77a7a" stroke-width="1"/>
<path d="M595.7 199.5 L603.4 203.3 L595.7 207.1 Z" fill="none" stroke="#b85a5a" stroke-width="1"/>
<line x1="603.4" y1="199.5" x2="603.4" y2="207.1" stroke="#b85a5a" stroke-width="1"/>
<line x1="597.8" y1="208.9" x2="602.4" y2="212.9" stroke="#b85a5a" stroke-width="0.8"/>
<path d="M602.4 212.9 L599.58 212.17 L601.29 210.21 Z" fill="#a83c3c"/>
<line x1="600.6" y1="208.7" x2="605.8" y2="213.3" stroke="#b85a5a" stroke-width="0.8"/>
<path d="M605.8 213.3 L602.99 212.55 L604.71 210.6 Z" fill="#a83c3c"/>
<line x1="588.4" y1="233.2" x2="610.4" y2="233.2" stroke="#c77a7a" stroke-width="1"/>
<path d="M595.7 229.4 L603.4 233.2 L595.7 237 Z" fill="none" stroke="#b85a5a" stroke-width="1"/>
<line x1="603.4" y1="229.4" x2="603.4" y2="237" stroke="#b85a5a" stroke-width="1"/>
<line x1="597.8" y1="238.8" x2="602.4" y2="242.8" stroke="#b85a5a" stroke-width="0.8"/>
<path d="M602.4 242.8 L599.58 242.07 L601.29 240.11 Z" fill="#a83c3c"/>
<line x1="600.6" y1="238.6" x2="605.8" y2="243.2" stroke="#b85a5a" stroke-width="0.8"/>
<path d="M605.8 243.2 L602.99 242.45 L604.71 240.5 Z" fill="#a83c3c"/>
<line x1="588.4" y1="262.8" x2="610.4" y2="262.8" stroke="#c77a7a" stroke-width="1"/>
<path d="M595.7 259 L603.4 262.8 L595.7 266.6 Z" fill="none" stroke="#b85a5a" stroke-width="1"/>
<line x1="603.4" y1="259" x2="603.4" y2="266.6" stroke="#b85a5a" stroke-width="1"/>
<line x1="597.8" y1="268.4" x2="602.4" y2="272.4" stroke="#b85a5a" stroke-width="0.8"/>
<path d="M602.4 272.4 L599.58 271.67 L601.29 269.71 Z" fill="#a83c3c"/>
<line x1="600.6" y1="268.2" x2="605.8" y2="272.8" stroke="#b85a5a" stroke-width="0.8"/>
<path d="M605.8 272.8 L602.99 272.05 L604.71 270.1 Z" fill="#a83c3c"/>
<line x1="588.4" y1="292.8" x2="610.4" y2="292.8" stroke="#c77a7a" stroke-width="1"/>
<path d="M595.7 289 L603.4 292.8 L595.7 296.6 Z" fill="none" stroke="#b85a5a" stroke-width="1"/>
<line x1="603.4" y1="289" x2="603.4" y2="296.6" stroke="#b85a5a" stroke-width="1"/>
<line x1="597.8" y1="298.4" x2="602.4" y2="302.4" stroke="#b85a5a" stroke-width="0.8"/>
<path d="M602.4 302.4 L599.58 301.67 L601.29 299.71 Z" fill="#a83c3c"/>
<line x1="600.6" y1="298.2" x2="605.8" y2="302.8" stroke="#b85a5a" stroke-width="0.8"/>
<path d="M605.8 302.8 L602.99 302.05 L604.71 300.1 Z" fill="#a83c3c"/>
<line x1="737" y1="174" x2="759" y2="174" stroke="#c77a7a" stroke-width="1"/>
<path d="M744.3 170.2 L752 174 L744.3 177.8 Z" fill="none" stroke="#b85a5a" stroke-width="1"/>
<line x1="752" y1="170.2" x2="752" y2="177.8" stroke="#b85a5a" stroke-width="1"/>
<line x1="746.4" y1="179.6" x2="751" y2="183.6" stroke="#b85a5a" stroke-width="0.8"/>
<path d="M751 183.6 L748.18 182.87 L749.89 180.91 Z" fill="#a83c3c"/>
<line x1="749.2" y1="179.4" x2="754.4" y2="184" stroke="#b85a5a" stroke-width="0.8"/>
<path d="M754.4 184 L751.59 183.25 L753.31 181.3 Z" fill="#a83c3c"/>
<line x1="737" y1="211.4" x2="759" y2="211.4" stroke="#c77a7a" stroke-width="1"/>
<path d="M744.3 207.6 L752 211.4 L744.3 215.2 Z" fill="none" stroke="#b85a5a" stroke-width="1"/>
<line x1="752" y1="207.6" x2="752" y2="215.2" stroke="#b85a5a" stroke-width="1"/>
<line x1="746.4" y1="217" x2="751" y2="221" stroke="#b85a5a" stroke-width="0.8"/>
<path d="M751 221 L748.18 220.27 L749.89 218.31 Z" fill="#a83c3c"/>
<line x1="749.2" y1="216.8" x2="754.4" y2="221.4" stroke="#b85a5a" stroke-width="0.8"/>
<path d="M754.4 221.4 L751.59 220.65 L753.31 218.7 Z" fill="#a83c3c"/>
<line x1="737" y1="255.4" x2="759" y2="255.4" stroke="#c77a7a" stroke-width="1"/>
<path d="M744.3 251.6 L752 255.4 L744.3 259.2 Z" fill="none" stroke="#b85a5a" stroke-width="1"/>
<line x1="752" y1="251.6" x2="752" y2="259.2" stroke="#b85a5a" stroke-width="1"/>
<line x1="746.4" y1="261" x2="751" y2="265" stroke="#b85a5a" stroke-width="0.8"/>
<path d="M751 265 L748.18 264.27 L749.89 262.31 Z" fill="#a83c3c"/>
<line x1="749.2" y1="260.8" x2="754.4" y2="265.4" stroke="#b85a5a" stroke-width="0.8"/>
<path d="M754.4 265.4 L751.59 264.65 L753.31 262.7 Z" fill="#a83c3c"/>
<line x1="737" y1="292.6" x2="759" y2="292.6" stroke="#c77a7a" stroke-width="1"/>
<path d="M744.3 288.8 L752 292.6 L744.3 296.4 Z" fill="none" stroke="#b85a5a" stroke-width="1"/>
<line x1="752" y1="288.8" x2="752" y2="296.4" stroke="#b85a5a" stroke-width="1"/>
<line x1="746.4" y1="298.2" x2="751" y2="302.2" stroke="#b85a5a" stroke-width="0.8"/>
<path d="M751 302.2 L748.18 301.47 L749.89 299.51 Z" fill="#a83c3c"/>
<line x1="749.2" y1="298" x2="754.4" y2="302.6" stroke="#b85a5a" stroke-width="0.8"/>
<path d="M754.4 302.6 L751.59 301.85 L753.31 299.9 Z" fill="#a83c3c"/>
<line x1="737" y1="329.8" x2="759" y2="329.8" stroke="#c77a7a" stroke-width="1"/>
<path d="M744.3 326 L752 329.8 L744.3 333.6 Z" fill="none" stroke="#b85a5a" stroke-width="1"/>
<line x1="752" y1="326" x2="752" y2="333.6" stroke="#b85a5a" stroke-width="1"/>
<line x1="746.4" y1="335.4" x2="751" y2="339.4" stroke="#b85a5a" stroke-width="0.8"/>
<path d="M751 339.4 L748.18 338.67 L749.89 336.71 Z" fill="#a83c3c"/>
<line x1="749.2" y1="335.2" x2="754.4" y2="339.8" stroke="#b85a5a" stroke-width="0.8"/>
<path d="M754.4 339.8 L751.59 339.05 L753.31 337.1 Z" fill="#a83c3c"/>
<line x1="737" y1="373.7" x2="759" y2="373.7" stroke="#c77a7a" stroke-width="1"/>
<path d="M744.3 369.9 L752 373.7 L744.3 377.5 Z" fill="none" stroke="#b85a5a" stroke-width="1"/>
<line x1="752" y1="369.9" x2="752" y2="377.5" stroke="#b85a5a" stroke-width="1"/>
<line x1="746.4" y1="379.3" x2="751" y2="383.3" stroke="#b85a5a" stroke-width="0.8"/>
<path d="M751 383.3 L748.18 382.57 L749.89 380.61 Z" fill="#a83c3c"/>
<line x1="749.2" y1="379.1" x2="754.4" y2="383.7" stroke="#b85a5a" stroke-width="0.8"/>
<path d="M754.4 383.7 L751.59 382.95 L753.31 381 Z" fill="#a83c3c"/>
<line x1="871" y1="173.8" x2="893" y2="173.8" stroke="#c77a7a" stroke-width="1"/>
<path d="M878.3 170 L886 173.8 L878.3 177.6 Z" fill="none" stroke="#b85a5a" stroke-width="1"/>
<line x1="886" y1="170" x2="886" y2="177.6" stroke="#b85a5a" stroke-width="1"/>
<line x1="880.4" y1="179.4" x2="885" y2="183.4" stroke="#b85a5a" stroke-width="0.8"/>
<path d="M885 183.4 L882.18 182.67 L883.89 180.71 Z" fill="#a83c3c"/>
<line x1="883.2" y1="179.2" x2="888.4" y2="183.8" stroke="#b85a5a" stroke-width="0.8"/>
<path d="M888.4 183.8 L885.59 183.05 L887.31 181.1 Z" fill="#a83c3c"/>
<line x1="871" y1="211.1" x2="893" y2="211.1" stroke="#c77a7a" stroke-width="1"/>
<path d="M878.3 207.3 L886 211.1 L878.3 214.9 Z" fill="none" stroke="#b85a5a" stroke-width="1"/>
<line x1="886" y1="207.3" x2="886" y2="214.9" stroke="#b85a5a" stroke-width="1"/>
<line x1="880.4" y1="216.7" x2="885" y2="220.7" stroke="#b85a5a" stroke-width="0.8"/>
<path d="M885 220.7 L882.18 219.97 L883.89 218.01 Z" fill="#a83c3c"/>
<line x1="883.2" y1="216.5" x2="888.4" y2="221.1" stroke="#b85a5a" stroke-width="0.8"/>
<path d="M888.4 221.1 L885.59 220.35 L887.31 218.4 Z" fill="#a83c3c"/>
<line x1="871" y1="255.3" x2="893" y2="255.3" stroke="#c77a7a" stroke-width="1"/>
<path d="M878.3 251.5 L886 255.3 L878.3 259.1 Z" fill="none" stroke="#b85a5a" stroke-width="1"/>
<line x1="886" y1="251.5" x2="886" y2="259.1" stroke="#b85a5a" stroke-width="1"/>
<line x1="880.4" y1="260.9" x2="885" y2="264.9" stroke="#b85a5a" stroke-width="0.8"/>
<path d="M885 264.9 L882.18 264.17 L883.89 262.21 Z" fill="#a83c3c"/>
<line x1="883.2" y1="260.7" x2="888.4" y2="265.3" stroke="#b85a5a" stroke-width="0.8"/>
<path d="M888.4 265.3 L885.59 264.55 L887.31 262.6 Z" fill="#a83c3c"/>
<line x1="871" y1="300.3" x2="893" y2="300.3" stroke="#c77a7a" stroke-width="1"/>
<path d="M878.3 296.5 L886 300.3 L878.3 304.1 Z" fill="none" stroke="#b85a5a" stroke-width="1"/>
<line x1="886" y1="296.5" x2="886" y2="304.1" stroke="#b85a5a" stroke-width="1"/>
<line x1="880.4" y1="305.9" x2="885" y2="309.9" stroke="#b85a5a" stroke-width="0.8"/>
<path d="M885 309.9 L882.18 309.17 L883.89 307.21 Z" fill="#a83c3c"/>
<line x1="883.2" y1="305.7" x2="888.4" y2="310.3" stroke="#b85a5a" stroke-width="0.8"/>
<path d="M888.4 310.3 L885.59 309.55 L887.31 307.6 Z" fill="#a83c3c"/>
<line x1="871" y1="336.9" x2="893" y2="336.9" stroke="#c77a7a" stroke-width="1"/>
<path d="M878.3 333.1 L886 336.9 L878.3 340.7 Z" fill="none" stroke="#b85a5a" stroke-width="1"/>
<line x1="886" y1="333.1" x2="886" y2="340.7" stroke="#b85a5a" stroke-width="1"/>
<line x1="880.4" y1="342.5" x2="885" y2="346.5" stroke="#b85a5a" stroke-width="0.8"/>
<path d="M885 346.5 L882.18 345.77 L883.89 343.81 Z" fill="#a83c3c"/>
<line x1="883.2" y1="342.3" x2="888.4" y2="346.9" stroke="#b85a5a" stroke-width="0.8"/>
<path d="M888.4 346.9 L885.59 346.15 L887.31 344.2 Z" fill="#a83c3c"/>
<line x1="871" y1="381.7" x2="893" y2="381.7" stroke="#c77a7a" stroke-width="1"/>
<path d="M878.3 377.9 L886 381.7 L878.3 385.5 Z" fill="none" stroke="#b85a5a" stroke-width="1"/>
<line x1="886" y1="377.9" x2="886" y2="385.5" stroke="#b85a5a" stroke-width="1"/>
<line x1="880.4" y1="387.3" x2="885" y2="391.3" stroke="#b85a5a" stroke-width="0.8"/>
<path d="M885 391.3 L882.18 390.57 L883.89 388.61 Z" fill="#a83c3c"/>
<line x1="883.2" y1="387.1" x2="888.4" y2="391.7" stroke="#b85a5a" stroke-width="0.8"/>
<path d="M888.4 391.7 L885.59 390.95 L887.31 389 Z" fill="#a83c3c"/>
<line x1="871" y1="425" x2="893" y2="425" stroke="#c77a7a" stroke-width="1"/>
<path d="M878.3 421.2 L886 425 L878.3 428.8 Z" fill="none" stroke="#b85a5a" stroke-width="1"/>
<line x1="886" y1="421.2" x2="886" y2="428.8" stroke="#b85a5a" stroke-width="1"/>
<line x1="880.4" y1="430.6" x2="885" y2="434.6" stroke="#b85a5a" stroke-width="0.8"/>
<path d="M885 434.6 L882.18 433.87 L883.89 431.91 Z" fill="#a83c3c"/>
<line x1="883.2" y1="430.4" x2="888.4" y2="435" stroke="#b85a5a" stroke-width="0.8"/>
<path d="M888.4 435 L885.59 434.25 L887.31 432.3 Z" fill="#a83c3c"/>
<rect x="357.8" y="406.8" width="30.2" height="44.6" fill="none" stroke="#a83a3a" stroke-width="1.5"/>
<circle cx="365.8" cy="422.9" r="3.3" fill="none" stroke="#b85a5a" stroke-width="0.9"/>
<circle cx="365.8" cy="435.7" r="3.3" fill="none" stroke="#b85a5a" stroke-width="0.9"/>
<circle cx="373.7" cy="422.9" r="3.3" fill="none" stroke="#b85a5a" stroke-width="0.9"/>
<circle cx="373.7" cy="435.7" r="3.3" fill="none" stroke="#b85a5a" stroke-width="0.9"/>
<circle cx="381.4" cy="422.9" r="3.3" fill="none" stroke="#b85a5a" stroke-width="0.9"/>
<circle cx="381.4" cy="435.7" r="3.3" fill="none" stroke="#b85a5a" stroke-width="0.9"/>
<circle cx="336.2" cy="174" r="2.05" fill="#2a9d2a"/>
<circle cx="358.2" cy="174" r="2.05" fill="#2a9d2a"/>
<circle cx="336.2" cy="203.5" r="2.05" fill="#2a9d2a"/>
<circle cx="366.2" cy="203.5" r="2.05" fill="#2a9d2a"/>
<circle cx="270.1" cy="285" r="2.05" fill="#2a9d2a"/>
<circle cx="270.1" cy="322.3" r="2.05" fill="#2a9d2a"/>
<circle cx="440.7" cy="233.2" r="2.05" fill="#2a9d2a"/>
<circle cx="440.7" cy="248.3" r="2.05" fill="#2a9d2a"/>
<circle cx="440.7" cy="255.5" r="2.05" fill="#2a9d2a"/>
<circle cx="455" cy="255.5" r="2.05" fill="#2a9d2a"/>
<circle cx="499.8" cy="255.5" r="2.05" fill="#2a9d2a"/>
<circle cx="440.7" cy="278.1" r="2.05" fill="#2a9d2a"/>
<circle cx="440.7" cy="285" r="2.05" fill="#2a9d2a"/>
<circle cx="440.7" cy="292.4" r="2.05" fill="#2a9d2a"/>
<circle cx="440.7" cy="314.5" r="2.05" fill="#2a9d2a"/>
<circle cx="440.7" cy="322.3" r="2.05" fill="#2a9d2a"/>
<circle cx="492.2" cy="330" r="2.05" fill="#2a9d2a"/>
<circle cx="492.2" cy="344.2" r="2.05" fill="#2a9d2a"/>
<circle cx="492.2" cy="351.6" r="2.05" fill="#2a9d2a"/>
<circle cx="492.2" cy="359.3" r="2.05" fill="#2a9d2a"/>
<circle cx="365.9" cy="418" r="2.05" fill="#2a9d2a"/>
<circle cx="373.6" cy="418" r="2.05" fill="#2a9d2a"/>
<circle cx="381.1" cy="418" r="2.05" fill="#2a9d2a"/>
<circle cx="365.8" cy="440.6" r="2.05" fill="#2a9d2a"/>
<circle cx="373.7" cy="440.6" r="2.05" fill="#2a9d2a"/>
<circle cx="381.4" cy="440.6" r="2.05" fill="#2a9d2a"/>
<line x1="366.4" y1="172.2" x2="366.4" y2="175.8" stroke="#8a8a8a" stroke-width="0.8"/>
<line x1="447.6" y1="201.7" x2="447.6" y2="205.3" stroke="#8a8a8a" stroke-width="0.8"/>
<line x1="455.5" y1="276.3" x2="455.5" y2="279.9" stroke="#8a8a8a" stroke-width="0.8"/>
<line x1="455.5" y1="283.2" x2="455.5" y2="286.8" stroke="#8a8a8a" stroke-width="0.8"/>
<line x1="455.5" y1="290.6" x2="455.5" y2="294.2" stroke="#8a8a8a" stroke-width="0.8"/>
<line x1="448" y1="312.7" x2="448" y2="316.3" stroke="#8a8a8a" stroke-width="0.8"/>
<line x1="448" y1="320.5" x2="448" y2="324.1" stroke="#8a8a8a" stroke-width="0.8"/>
<line x1="483.8" y1="328.2" x2="483.8" y2="331.8" stroke="#8a8a8a" stroke-width="0.8"/>
<line x1="470.5" y1="342.4" x2="470.5" y2="346" stroke="#8a8a8a" stroke-width="0.8"/>
<line x1="462.7" y1="349.8" x2="462.7" y2="353.4" stroke="#8a8a8a" stroke-width="0.8"/>
<line x1="453.8" y1="357.5" x2="453.8" y2="361.1" stroke="#8a8a8a" stroke-width="0.8"/>
<line x1="671.2" y1="261" x2="671.2" y2="264.6" stroke="#8a8a8a" stroke-width="0.8"/>
<line x1="804.5" y1="290.8" x2="804.5" y2="294.4" stroke="#8a8a8a" stroke-width="0.8"/>
<line x1="929.4" y1="298.5" x2="929.4" y2="302.1" stroke="#8a8a8a" stroke-width="0.8"/>
<line x1="262.4" y1="320.5" x2="262.4" y2="324.1" stroke="#8a8a8a" stroke-width="0.8"/>
<line x1="260.7" y1="285" x2="264.3" y2="285" stroke="#8a8a8a" stroke-width="0.8"/>
<line x1="475.7" y1="285.4" x2="479.3" y2="285.4" stroke="#8a8a8a" stroke-width="0.8"/>
<line x1="364.1" y1="395.8" x2="367.7" y2="395.8" stroke="#8a8a8a" stroke-width="0.8"/>
<line x1="371.8" y1="381.7" x2="375.4" y2="381.7" stroke="#8a8a8a" stroke-width="0.8"/>
<line x1="379.3" y1="366.5" x2="382.9" y2="366.5" stroke="#8a8a8a" stroke-width="0.8"/>
<line x1="364" y1="462.8" x2="367.6" y2="462.8" stroke="#8a8a8a" stroke-width="0.8"/>
<line x1="371.9" y1="469.4" x2="375.5" y2="469.4" stroke="#8a8a8a" stroke-width="0.8"/>
<line x1="379.6" y1="485.7" x2="383.2" y2="485.7" stroke="#8a8a8a" stroke-width="0.8"/>
<text x="355.8" y="450.6" font-size="4.8" fill="#8a8a8a" transform="rotate(-90 355.8 450.6)" textLength="8" lengthAdjust="spacingAndGlyphs">ISP</text>
<text x="339.3" y="166.7" font-size="7.7" fill="#6e6e6e" textLength="7.9" lengthAdjust="spacingAndGlyphs">C1</text>
<text x="366.5" y="174.2" font-size="7.7" fill="#6e6e6e" textLength="13.1" lengthAdjust="spacingAndGlyphs">GND</text>
<text x="340" y="199" font-size="7.7" fill="#6e6e6e" textLength="7" lengthAdjust="spacingAndGlyphs">R1</text>
<text x="340" y="213.7" font-size="7.7" fill="#6e6e6e" textLength="11" lengthAdjust="spacingAndGlyphs">10K</text>
<text x="448" y="203.3" font-size="7.7" fill="#6e6e6e" textLength="12" lengthAdjust="spacingAndGlyphs">RST</text>
<text x="284.5" y="223" font-size="7.7" fill="#6e6e6e" textLength="10" lengthAdjust="spacingAndGlyphs">IC1</text>
<text x="284.3" y="336.2" font-size="7.7" fill="#6e6e6e" textLength="46.7" lengthAdjust="spacingAndGlyphs">ATTINY44-SSU</text>
<text x="290.8" y="287.1" font-size="7.7" fill="#6e6e6e" textLength="13" lengthAdjust="spacingAndGlyphs">VCC</text>
<text x="290.8" y="324.4" font-size="7.7" fill="#6e6e6e" textLength="13.6" lengthAdjust="spacingAndGlyphs">GND</text>
<text x="261.2" y="283.2" font-size="7.7" fill="#6e6e6e" textLength="4.2" lengthAdjust="spacingAndGlyphs">V</text>
<text x="275.4" y="283.2" font-size="7.7" fill="#6e6e6e" textLength="2.1" lengthAdjust="spacingAndGlyphs">1</text>
<text x="255.5" y="322" font-size="7.7" fill="#6e6e6e" textLength="12.8" lengthAdjust="spacingAndGlyphs">GND</text>
<text x="271.3" y="320.9" font-size="7.7" fill="#6e6e6e" textLength="5.3" lengthAdjust="spacingAndGlyphs">14</text>
<text x="345.2" y="235.7" font-size="7.2" fill="#6e6e6e" textLength="72.5" lengthAdjust="spacingAndGlyphs">(PCINT11/RESET/DW)PB3</text>
<text x="322.2" y="243.3" font-size="7.2" fill="#6e6e6e" textLength="95.5" lengthAdjust="spacingAndGlyphs">(PCINT10/INT0/OC0A/CKOUT)PB2</text>
<text x="361.7" y="250.8" font-size="7.2" fill="#6e6e6e" textLength="56" lengthAdjust="spacingAndGlyphs">(PCINT9/XTAL2)PB1</text>
<text x="346.6" y="257.9" font-size="7.2" fill="#6e6e6e" textLength="71.1" lengthAdjust="spacingAndGlyphs">(PCINT8/XTAL1/CLKI)PB0</text>
<text x="333.7" y="273.1" font-size="7.2" fill="#6e6e6e" textLength="84" lengthAdjust="spacingAndGlyphs">(PCINT7/ICP/OC0B/ADC7)PA7</text>
<text x="314.3" y="280.6" font-size="7.2" fill="#6e6e6e" textLength="103.4" lengthAdjust="spacingAndGlyphs">(PCINT6/OC1A/SDA/MOSI/ADC6)PA6</text>
<text x="317.2" y="287.5" font-size="7.2" fill="#6e6e6e" textLength="100.5" lengthAdjust="spacingAndGlyphs">(PCINT5/OC1B/MISO/DO/ADC5)PA5</text>
<text x="323.6" y="294.9" font-size="7.2" fill="#6e6e6e" textLength="94.1" lengthAdjust="spacingAndGlyphs">(PCINT4/T1/SCL/USCK/ADC4)PA4</text>
<text x="356" y="302.8" font-size="7.2" fill="#6e6e6e" textLength="61.7" lengthAdjust="spacingAndGlyphs">(PCINT3/T0/ADC3)PA3</text>
<text x="348.8" y="309.7" font-size="7.2" fill="#6e6e6e" textLength="68.9" lengthAdjust="spacingAndGlyphs">(PCINT2/AIN1/ADC2)PA2</text>
<text x="348.8" y="317" font-size="7.2" fill="#6e6e6e" textLength="68.9" lengthAdjust="spacingAndGlyphs">(PCINT1/AIN0/ADC1)PA1</text>
<text x="346.6" y="324.8" font-size="7.2" fill="#6e6e6e" textLength="71.1" lengthAdjust="spacingAndGlyphs">(PCINT0/AREF/ADC0)PA0</text>
<text x="432" y="231.6" font-size="5.8" fill="#6e6e6e" textLength="3" lengthAdjust="spacingAndGlyphs">4</text>
<text x="432" y="239.2" font-size="5.8" fill="#6e6e6e" textLength="3" lengthAdjust="spacingAndGlyphs">5</text>
<text x="432" y="246.7" font-size="5.8" fill="#6e6e6e" textLength="3" lengthAdjust="spacingAndGlyphs">3</text>
<text x="432" y="253.8" font-size="5.8" fill="#6e6e6e" textLength="3" lengthAdjust="spacingAndGlyphs">2</text>
<text x="432" y="269" font-size="5.8" fill="#6e6e6e" textLength="3" lengthAdjust="spacingAndGlyphs">6</text>
<text x="432" y="276.5" font-size="5.8" fill="#6e6e6e" textLength="3" lengthAdjust="spacingAndGlyphs">7</text>
<text x="432" y="283.4" font-size="5.8" fill="#6e6e6e" textLength="3" lengthAdjust="spacingAndGlyphs">8</text>
<text x="432" y="290.8" font-size="5.8" fill="#6e6e6e" textLength="3" lengthAdjust="spacingAndGlyphs">9</text>
<text x="432" y="298.7" font-size="5.8" fill="#6e6e6e" textLength="6.3" lengthAdjust="spacingAndGlyphs">10</text>
<text x="432" y="305.6" font-size="5.8" fill="#6e6e6e" textLength="6.3" lengthAdjust="spacingAndGlyphs">11</text>
<text x="432" y="312.9" font-size="5.8" fill="#6e6e6e" textLength="6.3" lengthAdjust="spacingAndGlyphs">12</text>
<text x="432" y="320.7" font-size="5.8" fill="#6e6e6e" textLength="6.3" lengthAdjust="spacingAndGlyphs">13</text>
<text x="461" y="244.7" font-size="7.7" fill="#6e6e6e" textLength="12.6" lengthAdjust="spacingAndGlyphs">U$1</text>
<text x="458.8" y="253" font-size="6.4" fill="#6e6e6e" textLength="2.2" lengthAdjust="spacingAndGlyphs">1</text>
<text x="494.2" y="257.6" font-size="6.4" fill="#6e6e6e" textLength="3.2" lengthAdjust="spacingAndGlyphs">3</text>
<text x="484" y="277.5" font-size="7.7" fill="#6e6e6e" textLength="42" lengthAdjust="spacingAndGlyphs">RESONATOR</text>
<text x="478.5" y="284.7" font-size="7.7" fill="#6e6e6e" textLength="12.1" lengthAdjust="spacingAndGlyphs">GND</text>
<text x="455" y="277.5" font-size="7.7" fill="#6e6e6e" textLength="16.6" lengthAdjust="spacingAndGlyphs">MOSI</text>
<text x="455" y="284.8" font-size="7.7" fill="#6e6e6e" textLength="16.6" lengthAdjust="spacingAndGlyphs">MISO</text>
<text x="455" y="292" font-size="7.7" fill="#6e6e6e" textLength="13" lengthAdjust="spacingAndGlyphs">SCK</text>
<text x="448" y="314" font-size="7.7" fill="#6e6e6e" textLength="7.5" lengthAdjust="spacingAndGlyphs">RX</text>
<text x="448" y="321.5" font-size="7.7" fill="#6e6e6e" textLength="7.5" lengthAdjust="spacingAndGlyphs">TX</text>
<text x="502" y="324.6" font-size="7.7" fill="#6e6e6e" textLength="21.3" lengthAdjust="spacingAndGlyphs">(Black)</text>
<text x="501.5" y="375.5" font-size="7.7" fill="#6e6e6e" textLength="22.5" lengthAdjust="spacingAndGlyphs">(Green)</text>
<text x="513.4" y="332.5" font-size="7.2" fill="#6e6e6e" textLength="12.8" lengthAdjust="spacingAndGlyphs">GND</text>
<text x="513.4" y="339.2" font-size="7.2" fill="#6e6e6e" textLength="12.8" lengthAdjust="spacingAndGlyphs">CTS</text>
<text x="513.4" y="346.7" font-size="7.2" fill="#6e6e6e" textLength="12.8" lengthAdjust="spacingAndGlyphs">VCC</text>
<text x="513.4" y="354.1" font-size="7.2" fill="#6e6e6e" textLength="12.8" lengthAdjust="spacingAndGlyphs">TXD</text>
<text x="513.4" y="361.8" font-size="7.2" fill="#6e6e6e" textLength="12.8" lengthAdjust="spacingAndGlyphs">RXD</text>
<text x="513.4" y="369.2" font-size="7.2" fill="#6e6e6e" textLength="12.8" lengthAdjust="spacingAndGlyphs">RTS</text>
<text x="496.6" y="335.7" font-size="7.7" fill="#6e6e6e" textLength="2.4" lengthAdjust="spacingAndGlyphs">2</text>
<text x="496.6" y="343.2" font-size="7.7" fill="#6e6e6e" textLength="2.4" lengthAdjust="spacingAndGlyphs">3</text>
<text x="496.6" y="350.6" font-size="7.7" fill="#6e6e6e" textLength="2.4" lengthAdjust="spacingAndGlyphs">4</text>
<text x="496.6" y="358.3" font-size="7.7" fill="#6e6e6e" textLength="2.4" lengthAdjust="spacingAndGlyphs">5</text>
<text x="496.6" y="365.7" font-size="7.7" fill="#6e6e6e" textLength="2.4" lengthAdjust="spacingAndGlyphs">6</text>
<text x="484.5" y="329.3" font-size="7.7" fill="#6e6e6e" textLength="14.5" lengthAdjust="spacingAndGlyphs">GND</text>
<text x="469.2" y="343.8" font-size="7.7" fill="#6e6e6e" textLength="3.8" lengthAdjust="spacingAndGlyphs">V</text>
<text x="461.8" y="351.2" font-size="7.7" fill="#6e6e6e" textLength="8.2" lengthAdjust="spacingAndGlyphs">TX</text>
<text x="454.5" y="358.8" font-size="7.7" fill="#6e6e6e" textLength="8.5" lengthAdjust="spacingAndGlyphs">RX</text>
<text x="554" y="265.8" font-size="7.7" fill="#6e6e6e" textLength="9.7" lengthAdjust="spacingAndGlyphs">R2</text>
<text x="621" y="369" font-size="7.7" fill="#6e6e6e" textLength="8.4" lengthAdjust="spacingAndGlyphs">R3</text>
<text x="621" y="391.5" font-size="7.7" fill="#6e6e6e" textLength="8.4" lengthAdjust="spacingAndGlyphs">R4</text>
<text x="567" y="191.8" font-size="7.7" fill="#6e6e6e" textLength="42" lengthAdjust="spacingAndGlyphs">LEDFAB1206</text>
<text x="600.8" y="198.7" font-size="7.7" fill="#6e6e6e" textLength="6.9" lengthAdjust="spacingAndGlyphs">L1</text>
<text x="567" y="221.7" font-size="7.7" fill="#6e6e6e" textLength="42" lengthAdjust="spacingAndGlyphs">LEDFAB1206</text>
<text x="600.8" y="228.6" font-size="7.7" fill="#6e6e6e" textLength="6.9" lengthAdjust="spacingAndGlyphs">L2</text>
<text x="567" y="251.3" font-size="7.7" fill="#6e6e6e" textLength="42" lengthAdjust="spacingAndGlyphs">LEDFAB1206</text>
<text x="600.8" y="258.2" font-size="7.7" fill="#6e6e6e" textLength="6.9" lengthAdjust="spacingAndGlyphs">L3</text>
<text x="567" y="281.3" font-size="7.7" fill="#6e6e6e" textLength="42" lengthAdjust="spacingAndGlyphs">LEDFAB1206</text>
<text x="600.8" y="288.2" font-size="7.7" fill="#6e6e6e" textLength="6.9" lengthAdjust="spacingAndGlyphs">L4</text>
<text x="715.5" y="162.3" font-size="7.7" fill="#6e6e6e" textLength="41.5" lengthAdjust="spacingAndGlyphs">LEDFAB1206</text>
<text x="748.3" y="169" font-size="7.7" fill="#6e6e6e" textLength="7.9" lengthAdjust="spacingAndGlyphs">A1</text>
<text x="715.5" y="199.7" font-size="7.7" fill="#6e6e6e" textLength="41.5" lengthAdjust="spacingAndGlyphs">LEDFAB1206</text>
<text x="748.3" y="206.4" font-size="7.7" fill="#6e6e6e" textLength="7.9" lengthAdjust="spacingAndGlyphs">A2</text>
<text x="715.5" y="243.7" font-size="7.7" fill="#6e6e6e" textLength="41.5" lengthAdjust="spacingAndGlyphs">LEDFAB1206</text>
<text x="748.3" y="250.4" font-size="7.7" fill="#6e6e6e" textLength="7.9" lengthAdjust="spacingAndGlyphs">A3</text>
<text x="715.5" y="280.9" font-size="7.7" fill="#6e6e6e" textLength="41.5" lengthAdjust="spacingAndGlyphs">LEDFAB1206</text>
<text x="748.3" y="287.6" font-size="7.7" fill="#6e6e6e" textLength="7.9" lengthAdjust="spacingAndGlyphs">A4</text>
<text x="715.5" y="318.1" font-size="7.7" fill="#6e6e6e" textLength="41.5" lengthAdjust="spacingAndGlyphs">LEDFAB1206</text>
<text x="748.3" y="324.8" font-size="7.7" fill="#6e6e6e" textLength="7.9" lengthAdjust="spacingAndGlyphs">A5</text>
<text x="715.5" y="362" font-size="7.7" fill="#6e6e6e" textLength="41.5" lengthAdjust="spacingAndGlyphs">LEDFAB1206</text>
<text x="748.3" y="368.7" font-size="7.7" fill="#6e6e6e" textLength="7.9" lengthAdjust="spacingAndGlyphs">A6</text>
<text x="849" y="162.1" font-size="7.7" fill="#6e6e6e" textLength="41.2" lengthAdjust="spacingAndGlyphs">LEDFAB1206</text>
<text x="881.9" y="168.3" font-size="7.7" fill="#6e6e6e" textLength="8.3" lengthAdjust="spacingAndGlyphs">U1</text>
<text x="849" y="199.4" font-size="7.7" fill="#6e6e6e" textLength="41.2" lengthAdjust="spacingAndGlyphs">LEDFAB1206</text>
<text x="881.9" y="205.6" font-size="7.7" fill="#6e6e6e" textLength="8.3" lengthAdjust="spacingAndGlyphs">U2</text>
<text x="849" y="243.6" font-size="7.7" fill="#6e6e6e" textLength="41.2" lengthAdjust="spacingAndGlyphs">LEDFAB1206</text>
<text x="881.9" y="249.8" font-size="7.7" fill="#6e6e6e" textLength="8.3" lengthAdjust="spacingAndGlyphs">U3</text>
<text x="849" y="288.6" font-size="7.7" fill="#6e6e6e" textLength="41.2" lengthAdjust="spacingAndGlyphs">LEDFAB1206</text>
<text x="881.9" y="294.8" font-size="7.7" fill="#6e6e6e" textLength="8.3" lengthAdjust="spacingAndGlyphs">U4</text>
<text x="849" y="325.2" font-size="7.7" fill="#6e6e6e" textLength="41.2" lengthAdjust="spacingAndGlyphs">LEDFAB1206</text>
<text x="881.9" y="331.4" font-size="7.7" fill="#6e6e6e" textLength="8.3" lengthAdjust="spacingAndGlyphs">U5</text>
<text x="849" y="370" font-size="7.7" fill="#6e6e6e" textLength="41.2" lengthAdjust="spacingAndGlyphs">LEDFAB1206</text>
<text x="881.9" y="376.2" font-size="7.7" fill="#6e6e6e" textLength="8.3" lengthAdjust="spacingAndGlyphs">U6</text>
<text x="849" y="413.3" font-size="7.7" fill="#6e6e6e" textLength="41.2" lengthAdjust="spacingAndGlyphs">LEDFAB1206</text>
<text x="881.9" y="419.5" font-size="7.7" fill="#6e6e6e" textLength="8.3" lengthAdjust="spacingAndGlyphs">U7</text>
<text x="669.6" y="262.6" font-size="7.7" fill="#6e6e6e" textLength="14.4" lengthAdjust="spacingAndGlyphs">GND</text>
<text x="804.5" y="292.5" font-size="7.7" fill="#6e6e6e" textLength="12.8" lengthAdjust="spacingAndGlyphs">GND</text>
<text x="929.8" y="300.1" font-size="7.7" fill="#6e6e6e" textLength="13.1" lengthAdjust="spacingAndGlyphs">GND</text>
<text x="380.5" y="365.9" font-size="7.7" fill="#6e6e6e" textLength="16.4" lengthAdjust="spacingAndGlyphs">MISO</text>
<text x="372.6" y="381.4" font-size="7.7" fill="#6e6e6e" textLength="14" lengthAdjust="spacingAndGlyphs">SCK</text>
<text x="365" y="395.7" font-size="7.7" fill="#6e6e6e" textLength="13.5" lengthAdjust="spacingAndGlyphs">RST</text>
<text x="358.5" y="462.6" font-size="7.7" fill="#6e6e6e" textLength="13.3" lengthAdjust="spacingAndGlyphs">GND</text>
<text x="373.2" y="469.3" font-size="7.7" fill="#6e6e6e" textLength="17" lengthAdjust="spacingAndGlyphs">MOSI</text>
<text x="380" y="485.5" font-size="7.7" fill="#6e6e6e" textLength="3" lengthAdjust="spacingAndGlyphs">V</text>
<g transform="translate(-18.31 54.0) scale(0.269)">
<polyline points="262.5,285 262.5,174 336.2,174" fill="none" stroke="#5cb85c" stroke-width="2.3"/>
<polyline points="358.2,174 366.4,174" fill="none" stroke="#5cb85c" stroke-width="2.3"/>
<polyline points="270.1,285 270.1,203.5 336.2,203.5" fill="none" stroke="#5cb85c" stroke-width="2.3"/>
<polyline points="366.2,203.5 447.6,203.5 447.6,233.2 440.7,233.2" fill="none" stroke="#5cb85c" stroke-width="2.3"/>
<polyline points="262.5,285 270.1,285" fill="none" stroke="#5cb85c" stroke-width="2.3"/>
<polyline points="262.4,322.3 270.1,322.3" fill="none" stroke="#5cb85c" stroke-width="2.3"/>
<polyline points="440.7,248.3 447.6,248.3 447.6,241 507,241 507,255.5 499.8,255.5" fill="none" stroke="#5cb85c" stroke-width="2.3"/>
<polyline points="440.7,255.5 455,255.5" fill="none" stroke="#5cb85c" stroke-width="2.3"/>
<polyline points="440.7,270.6 552,270.6" fill="none" stroke="#5cb85c" stroke-width="2.3"/>
<polyline points="440.7,278.1 455.5,278.1" fill="none" stroke="#5cb85c" stroke-width="2.3"/>
<polyline points="440.7,285 455.5,285" fill="none" stroke="#5cb85c" stroke-width="2.3"/>
<polyline points="440.7,292.4 455.5,292.4" fill="none" stroke="#5cb85c" stroke-width="2.3"/>
<polyline points="440.7,300.3 544.3,300.3 544.3,373.9 618,373.9" fill="none" stroke="#5cb85c" stroke-width="2.3"/>
<polyline points="440.7,307.2 536.4,307.2 536.4,396.2 618,396.2" fill="none" stroke="#5cb85c" stroke-width="2.3"/>
<polyline points="440.7,314.5 448,314.5" fill="none" stroke="#5cb85c" stroke-width="2.3"/>
<polyline points="440.7,322.3 448,322.3" fill="none" stroke="#5cb85c" stroke-width="2.3"/>
<polyline points="477.5,270 477.5,285.4" fill="none" stroke="#5cb85c" stroke-width="2.3"/>
<polyline points="483.8,330 492.2,330" fill="none" stroke="#5cb85c" stroke-width="2.3"/>
<polyline points="470.5,344.2 492.2,344.2" fill="none" stroke="#5cb85c" stroke-width="2.3"/>
<polyline points="462.7,351.6 492.2,351.6" fill="none" stroke="#5cb85c" stroke-width="2.3"/>
<polyline points="453.8,359.3 492.2,359.3" fill="none" stroke="#5cb85c" stroke-width="2.3"/>
<polyline points="647.7,373.9 692.6,373.9" fill="none" stroke="#5cb85c" stroke-width="2.3"/>
<polyline points="647.7,396.2 833.7,396.2" fill="none" stroke="#5cb85c" stroke-width="2.3"/>
<polyline points="581.5,203.3 581.5,292.8" fill="none" stroke="#5cb85c" stroke-width="2.3"/>
<polyline points="655.4,203.3 655.4,292.8" fill="none" stroke="#5cb85c" stroke-width="2.3"/>
<polyline points="581.5,203.3 588.4,203.3" fill="none" stroke="#5cb85c" stroke-width="2.3"/>
<polyline points="610.5,203.3 655.4,203.3" fill="none" stroke="#5cb85c" stroke-width="2.3"/>
<polyline points="581.5,233.2 588.4,233.2" fill="none" stroke="#5cb85c" stroke-width="2.3"/>
<polyline points="610.5,233.2 655.4,233.2" fill="none" stroke="#5cb85c" stroke-width="2.3"/>
<polyline points="581.5,262.8 588.4,262.8" fill="none" stroke="#5cb85c" stroke-width="2.3"/>
<polyline points="610.5,262.8 655.4,262.8" fill="none" stroke="#5cb85c" stroke-width="2.3"/>
<polyline points="581.5,292.8 588.4,292.8" fill="none" stroke="#5cb85c" stroke-width="2.3"/>
<polyline points="610.5,292.8 655.4,292.8" fill="none" stroke="#5cb85c" stroke-width="2.3"/>
<polyline points="655.4,262.8 671.2,262.8" fill="none" stroke="#5cb85c" stroke-width="2.3"/>
<polyline points="692.6,174 692.6,373.9" fill="none" stroke="#5cb85c" stroke-width="2.3"/>
<polyline points="781.6,174 781.6,373.7" fill="none" stroke="#5cb85c" stroke-width="2.3"/>
<polyline points="692.6,174 737,174" fill="none" stroke="#5cb85c" stroke-width="2.3"/>
<polyline points="759,174 781.6,174" fill="none" stroke="#5cb85c" stroke-width="2.3"/>
<polyline points="692.6,211.4 737,211.4" fill="none" stroke="#5cb85c" stroke-width="2.3"/>
<polyline points="759,211.4 781.6,211.4" fill="none" stroke="#5cb85c" stroke-width="2.3"/>
<polyline points="692.6,255.4 737,255.4" fill="none" stroke="#5cb85c" stroke-width="2.3"/>
<polyline points="759,255.4 781.6,255.4" fill="none" stroke="#5cb85c" stroke-width="2.3"/>
<polyline points="692.6,292.6 737,292.6" fill="none" stroke="#5cb85c" stroke-width="2.3"/>
<polyline points="759,292.6 781.6,292.6" fill="none" stroke="#5cb85c" stroke-width="2.3"/>
<polyline points="692.6,329.8 737,329.8" fill="none" stroke="#5cb85c" stroke-width="2.3"/>
<polyline points="759,329.8 781.6,329.8" fill="none" stroke="#5cb85c" stroke-width="2.3"/>
<polyline points="692.6,373.7 737,373.7" fill="none" stroke="#5cb85c" stroke-width="2.3"/>
<polyline points="759,373.7 781.6,373.7" fill="none" stroke="#5cb85c" stroke-width="2.3"/>
<polyline points="781.6,292.6 804.5,292.6" fill="none" stroke="#5cb85c" stroke-width="2.3"/>
<polyline points="833.7,173.8 833.7,425" fill="none" stroke="#5cb85c" stroke-width="2.3"/>
<polyline points="915.3,173.8 915.3,425" fill="none" stroke="#5cb85c" stroke-width="2.3"/>
<polyline points="833.7,173.8 871,173.8" fill="none" stroke="#5cb85c" stroke-width="2.3"/>
<polyline points="893,173.8 915.3,173.8" fill="none" stroke="#5cb85c" stroke-width="2.3"/>
<polyline points="833.7,211.1 871,211.1" fill="none" stroke="#5cb85c" stroke-width="2.3"/>
<polyline points="893,211.1 915.3,211.1" fill="none" stroke="#5cb85c" stroke-width="2.3"/>
<polyline points="833.7,255.3 871,255.3" fill="none" stroke="#5cb85c" stroke-width="2.3"/>
<polyline points="893,255.3 915.3,255.3" fill="none" stroke="#5cb85c" stroke-width="2.3"/>
<polyline points="833.7,300.3 871,300.3" fill="none" stroke="#5cb85c" stroke-width="2.3"/>
<polyline points="893,300.3 915.3,300.3" fill="none" stroke="#5cb85c" stroke-width="2.3"/>
<polyline points="833.7,336.9 871,336.9" fill="none" stroke="#5cb85c" stroke-width="2.3"/>
<polyline points="893,336.9 915.3,336.9" fill="none" stroke="#5cb85c" stroke-width="2.3"/>
<polyline points="833.7,381.7 871,381.7" fill="none" stroke="#5cb85c" stroke-width="2.3"/>
<polyline points="893,381.7 915.3,381.7" fill="none" stroke="#5cb85c" stroke-width="2.3"/>
<polyline points="833.7,425 871,425" fill="none" stroke="#5cb85c" stroke-width="2.3"/>
<polyline points="893,425 915.3,425" fill="none" stroke="#5cb85c" stroke-width="2.3"/>
<polyline points="915.3,300.3 929.4,300.3" fill="none" stroke="#5cb85c" stroke-width="2.3"/>
<polyline points="365.9,395.8 365.9,418" fill="none" stroke="#5cb85c" stroke-width="2.3"/>
<polyline points="373.6,381.7 373.6,418" fill="none" stroke="#5cb85c" stroke-width="2.3"/>
<polyline points="381.1,366.5 381.1,418" fill="none" stroke="#5cb85c" stroke-width="2.3"/>
<polyline points="365.8,440.6 365.8,462.8" fill="none" stroke="#5cb85c" stroke-width="2.3"/>
<polyline points="373.7,440.6 373.7,469.4" fill="none" stroke="#5cb85c" stroke-width="2.3"/>
<polyline points="381.4,440.6 381.4,485.7" fill="none" stroke="#5cb85c" stroke-width="2.3"/>
<line x1="336.2" y1="174" x2="346.1" y2="174" stroke="#b85a5a" stroke-width="2.6"/>
<line x1="346.1" y1="169" x2="346.1" y2="179" stroke="#b85a5a" stroke-width="2.6"/>
<line x1="349.2" y1="169" x2="349.2" y2="179" stroke="#b85a5a" stroke-width="2.6"/>
<line x1="349.2" y1="174" x2="358.2" y2="174" stroke="#b85a5a" stroke-width="2.6"/>
<line x1="336.2" y1="203.5" x2="343.5" y2="203.5" stroke="#b85a5a" stroke-width="2.6"/>
<line x1="358.7" y1="203.5" x2="366.2" y2="203.5" stroke="#b85a5a" stroke-width="2.6"/>
<polyline points="343.5,203.5 344.57,201 346.36,206 348.15,201 349.94,206 351.73,201 353.51,206 355.3,201 357.09,206 358.7,203.5" fill="none" stroke="#ab4646" stroke-width="2.3"/>
<rect x="284.5" y="225.7" width="141.1" height="103.6" fill="none" stroke="#b85a5a" stroke-width="1"/>
<line x1="270.1" y1="285" x2="284.5" y2="285" stroke="#b85a5a" stroke-width="2.6"/>
<line x1="270.1" y1="322.3" x2="284.5" y2="322.3" stroke="#b85a5a" stroke-width="2.6"/>
<path d="M290.6 278.2 H294 M292.3 276.6 V279.6" stroke="#b85a5a" stroke-width="0.8"/>
<line x1="425.6" y1="233.2" x2="440.7" y2="233.2" stroke="#b85a5a" stroke-width="2.6"/>
<line x1="425.6" y1="240.8" x2="440.7" y2="240.8" stroke="#b85a5a" stroke-width="2.6"/>
<line x1="425.6" y1="248.3" x2="440.7" y2="248.3" stroke="#b85a5a" stroke-width="2.6"/>
<line x1="425.6" y1="255.4" x2="440.7" y2="255.4" stroke="#b85a5a" stroke-width="2.6"/>
<line x1="425.6" y1="270.6" x2="440.7" y2="270.6" stroke="#b85a5a" stroke-width="2.6"/>
<line x1="425.6" y1="278.1" x2="440.7" y2="278.1" stroke="#b85a5a" stroke-width="2.6"/>
<line x1="425.6" y1="285" x2="440.7" y2="285" stroke="#b85a5a" stroke-width="2.6"/>
<line x1="425.6" y1="292.4" x2="440.7" y2="292.4" stroke="#b85a5a" stroke-width="2.6"/>
<line x1="425.6" y1="300.3" x2="440.7" y2="300.3" stroke="#b85a5a" stroke-width="2.6"/>
<line x1="425.6" y1="307.2" x2="440.7" y2="307.2" stroke="#b85a5a" stroke-width="2.6"/>
<line x1="425.6" y1="314.5" x2="440.7" y2="314.5" stroke="#b85a5a" stroke-width="2.6"/>
<line x1="425.6" y1="322.3" x2="440.7" y2="322.3" stroke="#b85a5a" stroke-width="2.6"/>
<rect x="462.7" y="248.6" width="29.9" height="21.4" fill="none" stroke="#b85a5a" stroke-width="1"/>
<line x1="455" y1="255.5" x2="473.6" y2="255.5" stroke="#b85a5a" stroke-width="2.6"/>
<line x1="481.5" y1="255.5" x2="499.8" y2="255.5" stroke="#b85a5a" stroke-width="2.6"/>
<line x1="473.6" y1="251.5" x2="473.6" y2="259.5" stroke="#b85a5a" stroke-width="2.6"/>
<line x1="481.5" y1="251.5" x2="481.5" y2="259.5" stroke="#b85a5a" stroke-width="2.6"/>
<rect x="475.6" y="251.3" width="3.8" height="8.4" fill="none" stroke="#b85a5a" stroke-width="0.9"/>
<polyline points="466.4,255.5 466.4,265 470.5,265" fill="none" stroke="#b85a5a" stroke-width="2.3"/>
<polyline points="488.7,255.5 488.7,265 484.6,265" fill="none" stroke="#b85a5a" stroke-width="2.3"/>
<line x1="470.5" y1="262" x2="470.5" y2="268" stroke="#b85a5a" stroke-width="2.6"/>
<line x1="472.3" y1="262" x2="472.3" y2="268" stroke="#b85a5a" stroke-width="2.6"/>
<line x1="482.8" y1="262" x2="482.8" y2="268" stroke="#b85a5a" stroke-width="2.6"/>
<line x1="484.6" y1="262" x2="484.6" y2="268" stroke="#b85a5a" stroke-width="2.6"/>
<line x1="472.3" y1="265" x2="482.8" y2="265" stroke="#b85a5a" stroke-width="2.6"/>
<line x1="477.5" y1="265" x2="477.5" y2="271" stroke="#b85a5a" stroke-width="2.6"/>
<rect x="499.6" y="317.2" width="29.6" height="61.3" fill="none" stroke="#b85a5a" stroke-width="1"/>
<line x1="492.2" y1="330" x2="507" y2="330" stroke="#b85a5a" stroke-width="2.6"/>
<line x1="492.2" y1="336.7" x2="507" y2="336.7" stroke="#b85a5a" stroke-width="2.6"/>
<line x1="492.2" y1="344.2" x2="507" y2="344.2" stroke="#b85a5a" stroke-width="2.6"/>
<line x1="492.2" y1="351.6" x2="507" y2="351.6" stroke="#b85a5a" stroke-width="2.6"/>
<line x1="492.2" y1="359.3" x2="507" y2="359.3" stroke="#b85a5a" stroke-width="2.6"/>
<line x1="492.2" y1="366.7" x2="507" y2="366.7" stroke="#b85a5a" stroke-width="2.6"/>
<line x1="492.7" y1="363.7" x2="492.7" y2="369.7" stroke="#b85a5a" stroke-width="2.6"/>
<line x1="552" y1="270.7" x2="557.8" y2="270.7" stroke="#b85a5a" stroke-width="2.6"/>
<line x1="574.6" y1="270.7" x2="581.5" y2="270.7" stroke="#b85a5a" stroke-width="2.6"/>
<polyline points="557.8,270.7 558.99,268.2 560.96,273.2 562.94,268.2 564.92,273.2 566.89,268.2 568.87,273.2 570.84,268.2 572.82,273.2 574.6,270.7" fill="none" stroke="#ab4646" stroke-width="2.3"/>
<line x1="618" y1="373.9" x2="625.6" y2="373.9" stroke="#b85a5a" stroke-width="2.6"/>
<line x1="640.7" y1="373.9" x2="647.7" y2="373.9" stroke="#b85a5a" stroke-width="2.6"/>
<polyline points="625.6,373.9 626.67,371.4 628.44,376.4 630.22,371.4 632,376.4 633.77,371.4 635.55,376.4 637.32,371.4 639.1,376.4 640.7,373.9" fill="none" stroke="#ab4646" stroke-width="2.3"/>
<line x1="618" y1="396.2" x2="625.6" y2="396.2" stroke="#b85a5a" stroke-width="2.6"/>
<line x1="640.7" y1="396.2" x2="647.7" y2="396.2" stroke="#b85a5a" stroke-width="2.6"/>
<polyline points="625.6,396.2 626.67,393.7 628.44,398.7 630.22,393.7 632,398.7 633.77,393.7 635.55,398.7 637.32,393.7 639.1,398.7 640.7,396.2" fill="none" stroke="#ab4646" stroke-width="2.3"/>
<line x1="588.4" y1="203.3" x2="610.4" y2="203.3" stroke="#c77a7a" stroke-width="2.6"/>
<path d="M595.7 199.5 L603.4 203.3 L595.7 207.1 Z" fill="none" stroke="#b85a5a" stroke-width="1"/>
<line x1="603.4" y1="199.5" x2="603.4" y2="207.1" stroke="#b85a5a" stroke-width="2.6"/>
<line x1="597.8" y1="208.9" x2="602.4" y2="212.9" stroke="#b85a5a" stroke-width="2.6"/>
<path d="M602.4 212.9 L599.58 212.17 L601.29 210.21 Z" fill="#a83c3c"/>
<line x1="600.6" y1="208.7" x2="605.8" y2="213.3" stroke="#b85a5a" stroke-width="2.6"/>
<path d="M605.8 213.3 L602.99 212.55 L604.71 210.6 Z" fill="#a83c3c"/>
<line x1="588.4" y1="233.2" x2="610.4" y2="233.2" stroke="#c77a7a" stroke-width="2.6"/>
<path d="M595.7 229.4 L603.4 233.2 L595.7 237 Z" fill="none" stroke="#b85a5a" stroke-width="1"/>
<line x1="603.4" y1="229.4" x2="603.4" y2="237" stroke="#b85a5a" stroke-width="2.6"/>
<line x1="597.8" y1="238.8" x2="602.4" y2="242.8" stroke="#b85a5a" stroke-width="2.6"/>
<path d="M602.4 242.8 L599.58 242.07 L601.29 240.11 Z" fill="#a83c3c"/>
<line x1="600.6" y1="238.6" x2="605.8" y2="243.2" stroke="#b85a5a" stroke-width="2.6"/>
<path d="M605.8 243.2 L602.99 242.45 L604.71 240.5 Z" fill="#a83c3c"/>
<line x1="588.4" y1="262.8" x2="610.4" y2="262.8" stroke="#c77a7a" stroke-width="2.6"/>
<path d="M595.7 259 L603.4 262.8 L595.7 266.6 Z" fill="none" stroke="#b85a5a" stroke-width="1"/>
<line x1="603.4" y1="259" x2="603.4" y2="266.6" stroke="#b85a5a" stroke-width="2.6"/>
<line x1="597.8" y1="268.4" x2="602.4" y2="272.4" stroke="#b85a5a" stroke-width="2.6"/>
<path d="M602.4 272.4 L599.58 271.67 L601.29 269.71 Z" fill="#a83c3c"/>
<line x1="600.6" y1="268.2" x2="605.8" y2="272.8" stroke="#b85a5a" stroke-width="2.6"/>
<path d="M605.8 272.8 L602.99 272.05 L604.71 270.1 Z" fill="#a83c3c"/>
<line x1="588.4" y1="292.8" x2="610.4" y2="292.8" stroke="#c77a7a" stroke-width="2.6"/>
<path d="M595.7 289 L603.4 292.8 L595.7 296.6 Z" fill="none" stroke="#b85a5a" stroke-width="1"/>
<line x1="603.4" y1="289" x2="603.4" y2="296.6" stroke="#b85a5a" stroke-width="2.6"/>
<line x1="597.8" y1="298.4" x2="602.4" y2="302.4" stroke="#b85a5a" stroke-width="2.6"/>
<path d="M602.4 302.4 L599.58 301.67 L601.29 299.71 Z" fill="#a83c3c"/>
<line x1="600.6" y1="298.2" x2="605.8" y2="302.8" stroke="#b85a5a" stroke-width="2.6"/>
<path d="M605.8 302.8 L602.99 302.05 L604.71 300.1 Z" fill="#a83c3c"/>
<line x1="737" y1="174" x2="759" y2="174" stroke="#c77a7a" stroke-width="2.6"/>
<path d="M744.3 170.2 L752 174 L744.3 177.8 Z" fill="none" stroke="#b85a5a" stroke-width="1"/>
<line x1="752" y1="170.2" x2="752" y2="177.8" stroke="#b85a5a" stroke-width="2.6"/>
<line x1="746.4" y1="179.6" x2="751" y2="183.6" stroke="#b85a5a" stroke-width="2.6"/>
<path d="M751 183.6 L748.18 182.87 L749.89 180.91 Z" fill="#a83c3c"/>
<line x1="749.2" y1="179.4" x2="754.4" y2="184" stroke="#b85a5a" stroke-width="2.6"/>
<path d="M754.4 184 L751.59 183.25 L753.31 181.3 Z" fill="#a83c3c"/>
<line x1="737" y1="211.4" x2="759" y2="211.4" stroke="#c77a7a" stroke-width="2.6"/>
<path d="M744.3 207.6 L752 211.4 L744.3 215.2 Z" fill="none" stroke="#b85a5a" stroke-width="1"/>
<line x1="752" y1="207.6" x2="752" y2="215.2" stroke="#b85a5a" stroke-width="2.6"/>
<line x1="746.4" y1="217" x2="751" y2="221" stroke="#b85a5a" stroke-width="2.6"/>
<path d="M751 221 L748.18 220.27 L749.89 218.31 Z" fill="#a83c3c"/>
<line x1="749.2" y1="216.8" x2="754.4" y2="221.4" stroke="#b85a5a" stroke-width="2.6"/>
<path d="M754.4 221.4 L751.59 220.65 L753.31 218.7 Z" fill="#a83c3c"/>
<line x1="737" y1="255.4" x2="759" y2="255.4" stroke="#c77a7a" stroke-width="2.6"/>
<path d="M744.3 251.6 L752 255.4 L744.3 259.2 Z" fill="none" stroke="#b85a5a" stroke-width="1"/>
<line x1="752" y1="251.6" x2="752" y2="259.2" stroke="#b85a5a" stroke-width="2.6"/>
<line x1="746.4" y1="261" x2="751" y2="265" stroke="#b85a5a" stroke-width="2.6"/>
<path d="M751 265 L748.18 264.27 L749.89 262.31 Z" fill="#a83c3c"/>
<line x1="749.2" y1="260.8" x2="754.4" y2="265.4" stroke="#b85a5a" stroke-width="2.6"/>
<path d="M754.4 265.4 L751.59 264.65 L753.31 262.7 Z" fill="#a83c3c"/>
<line x1="737" y1="292.6" x2="759" y2="292.6" stroke="#c77a7a" stroke-width="2.6"/>
<path d="M744.3 288.8 L752 292.6 L744.3 296.4 Z" fill="none" stroke="#b85a5a" stroke-width="1"/>
<line x1="752" y1="288.8" x2="752" y2="296.4" stroke="#b85a5a" stroke-width="2.6"/>
<line x1="746.4" y1="298.2" x2="751" y2="302.2" stroke="#b85a5a" stroke-width="2.6"/>
<path d="M751 302.2 L748.18 301.47 L749.89 299.51 Z" fill="#a83c3c"/>
<line x1="749.2" y1="298" x2="754.4" y2="302.6" stroke="#b85a5a" stroke-width="2.6"/>
<path d="M754.4 302.6 L751.59 301.85 L753.31 299.9 Z" fill="#a83c3c"/>
<line x1="737" y1="329.8" x2="759" y2="329.8" stroke="#c77a7a" stroke-width="2.6"/>
<path d="M744.3 326 L752 329.8 L744.3 333.6 Z" fill="none" stroke="#b85a5a" stroke-width="1"/>
<line x1="752" y1="326" x2="752" y2="333.6" stroke="#b85a5a" stroke-width="2.6"/>
<line x1="746.4" y1="335.4" x2="751" y2="339.4" stroke="#b85a5a" stroke-width="2.6"/>
<path d="M751 339.4 L748.18 338.67 L749.89 336.71 Z" fill="#a83c3c"/>
<line x1="749.2" y1="335.2" x2="754.4" y2="339.8" stroke="#b85a5a" stroke-width="2.6"/>
<path d="M754.4 339.8 L751.59 339.05 L753.31 337.1 Z" fill="#a83c3c"/>
<line x1="737" y1="373.7" x2="759" y2="373.7" stroke="#c77a7a" stroke-width="2.6"/>
<path d="M744.3 369.9 L752 373.7 L744.3 377.5 Z" fill="none" stroke="#b85a5a" stroke-width="1"/>
<line x1="752" y1="369.9" x2="752" y2="377.5" stroke="#b85a5a" stroke-width="2.6"/>
<line x1="746.4" y1="379.3" x2="751" y2="383.3" stroke="#b85a5a" stroke-width="2.6"/>
<path d="M751 383.3 L748.18 382.57 L749.89 380.61 Z" fill="#a83c3c"/>
<line x1="749.2" y1="379.1" x2="754.4" y2="383.7" stroke="#b85a5a" stroke-width="2.6"/>
<path d="M754.4 383.7 L751.59 382.95 L753.31 381 Z" fill="#a83c3c"/>
<line x1="871" y1="173.8" x2="893" y2="173.8" stroke="#c77a7a" stroke-width="2.6"/>
<path d="M878.3 170 L886 173.8 L878.3 177.6 Z" fill="none" stroke="#b85a5a" stroke-width="1"/>
<line x1="886" y1="170" x2="886" y2="177.6" stroke="#b85a5a" stroke-width="2.6"/>
<line x1="880.4" y1="179.4" x2="885" y2="183.4" stroke="#b85a5a" stroke-width="2.6"/>
<path d="M885 183.4 L882.18 182.67 L883.89 180.71 Z" fill="#a83c3c"/>
<line x1="883.2" y1="179.2" x2="888.4" y2="183.8" stroke="#b85a5a" stroke-width="2.6"/>
<path d="M888.4 183.8 L885.59 183.05 L887.31 181.1 Z" fill="#a83c3c"/>
<line x1="871" y1="211.1" x2="893" y2="211.1" stroke="#c77a7a" stroke-width="2.6"/>
<path d="M878.3 207.3 L886 211.1 L878.3 214.9 Z" fill="none" stroke="#b85a5a" stroke-width="1"/>
<line x1="886" y1="207.3" x2="886" y2="214.9" stroke="#b85a5a" stroke-width="2.6"/>
<line x1="880.4" y1="216.7" x2="885" y2="220.7" stroke="#b85a5a" stroke-width="2.6"/>
<path d="M885 220.7 L882.18 219.97 L883.89 218.01 Z" fill="#a83c3c"/>
<line x1="883.2" y1="216.5" x2="888.4" y2="221.1" stroke="#b85a5a" stroke-width="2.6"/>
<path d="M888.4 221.1 L885.59 220.35 L887.31 218.4 Z" fill="#a83c3c"/>
<line x1="871" y1="255.3" x2="893" y2="255.3" stroke="#c77a7a" stroke-width="2.6"/>
<path d="M878.3 251.5 L886 255.3 L878.3 259.1 Z" fill="none" stroke="#b85a5a" stroke-width="1"/>
<line x1="886" y1="251.5" x2="886" y2="259.1" stroke="#b85a5a" stroke-width="2.6"/>
<line x1="880.4" y1="260.9" x2="885" y2="264.9" stroke="#b85a5a" stroke-width="2.6"/>
<path d="M885 264.9 L882.18 264.17 L883.89 262.21 Z" fill="#a83c3c"/>
<line x1="883.2" y1="260.7" x2="888.4" y2="265.3" stroke="#b85a5a" stroke-width="2.6"/>
<path d="M888.4 265.3 L885.59 264.55 L887.31 262.6 Z" fill="#a83c3c"/>
<line x1="871" y1="300.3" x2="893" y2="300.3" stroke="#c77a7a" stroke-width="2.6"/>
<path d="M878.3 296.5 L886 300.3 L878.3 304.1 Z" fill="none" stroke="#b85a5a" stroke-width="1"/>
<line x1="886" y1="296.5" x2="886" y2="304.1" stroke="#b85a5a" stroke-width="2.6"/>
<line x1="880.4" y1="305.9" x2="885" y2="309.9" stroke="#b85a5a" stroke-width="2.6"/>
<path d="M885 309.9 L882.18 309.17 L883.89 307.21 Z" fill="#a83c3c"/>
<line x1="883.2" y1="305.7" x2="888.4" y2="310.3" stroke="#b85a5a" stroke-width="2.6"/>
<path d="M888.4 310.3 L885.59 309.55 L887.31 307.6 Z" fill="#a83c3c"/>
<line x1="871" y1="336.9" x2="893" y2="336.9" stroke="#c77a7a" stroke-width="2.6"/>
<path d="M878.3 333.1 L886 336.9 L878.3 340.7 Z" fill="none" stroke="#b85a5a" stroke-width="1"/>
<line x1="886" y1="333.1" x2="886" y2="340.7" stroke="#b85a5a" stroke-width="2.6"/>
<line x1="880.4" y1="342.5" x2="885" y2="346.5" stroke="#b85a5a" stroke-width="2.6"/>
<path d="M885 346.5 L882.18 345.77 L883.89 343.81 Z" fill="#a83c3c"/>
<line x1="883.2" y1="342.3" x2="888.4" y2="346.9" stroke="#b85a5a" stroke-width="2.6"/>
<path d="M888.4 346.9 L885.59 346.15 L887.31 344.2 Z" fill="#a83c3c"/>
<line x1="871" y1="381.7" x2="893" y2="381.7" stroke="#c77a7a" stroke-width="2.6"/>
<path d="M878.3 377.9 L886 381.7 L878.3 385.5 Z" fill="none" stroke="#b85a5a" stroke-width="1"/>
<line x1="886" y1="377.9" x2="886" y2="385.5" stroke="#b85a5a" stroke-width="2.6"/>
<line x1="880.4" y1="387.3" x2="885" y2="391.3" stroke="#b85a5a" stroke-width="2.6"/>
<path d="M885 391.3 L882.18 390.57 L883.89 388.61 Z" fill="#a83c3c"/>
<line x1="883.2" y1="387.1" x2="888.4" y2="391.7" stroke="#b85a5a" stroke-width="2.6"/>
<path d="M888.4 391.7 L885.59 390.95 L887.31 389 Z" fill="#a83c3c"/>
<line x1="871" y1="425" x2="893" y2="425" stroke="#c77a7a" stroke-width="2.6"/>
<path d="M878.3 421.2 L886 425 L878.3 428.8 Z" fill="none" stroke="#b85a5a" stroke-width="1"/>
<line x1="886" y1="421.2" x2="886" y2="428.8" stroke="#b85a5a" stroke-width="2.6"/>
<line x1="880.4" y1="430.6" x2="885" y2="434.6" stroke="#b85a5a" stroke-width="2.6"/>
<path d="M885 434.6 L882.18 433.87 L883.89 431.91 Z" fill="#a83c3c"/>
<line x1="883.2" y1="430.4" x2="888.4" y2="435" stroke="#b85a5a" stroke-width="2.6"/>
<path d="M888.4 435 L885.59 434.25 L887.31 432.3 Z" fill="#a83c3c"/>
<rect x="357.8" y="406.8" width="30.2" height="44.6" fill="none" stroke="#a83a3a" stroke-width="1.5"/>
<circle cx="365.8" cy="422.9" r="3.3" fill="none" stroke="#b85a5a" stroke-width="0.9"/>
<circle cx="365.8" cy="435.7" r="3.3" fill="none" stroke="#b85a5a" stroke-width="0.9"/>
<circle cx="373.7" cy="422.9" r="3.3" fill="none" stroke="#b85a5a" stroke-width="0.9"/>
<circle cx="373.7" cy="435.7" r="3.3" fill="none" stroke="#b85a5a" stroke-width="0.9"/>
<circle cx="381.4" cy="422.9" r="3.3" fill="none" stroke="#b85a5a" stroke-width="0.9"/>
<circle cx="381.4" cy="435.7" r="3.3" fill="none" stroke="#b85a5a" stroke-width="0.9"/>
<circle cx="336.2" cy="174" r="4.4" fill="#2a9d2a"/>
<circle cx="358.2" cy="174" r="4.4" fill="#2a9d2a"/>
<circle cx="336.2" cy="203.5" r="4.4" fill="#2a9d2a"/>
<circle cx="366.2" cy="203.5" r="4.4" fill="#2a9d2a"/>
<circle cx="270.1" cy="285" r="4.4" fill="#2a9d2a"/>
<circle cx="270.1" cy="322.3" r="4.4" fill="#2a9d2a"/>
<circle cx="440.7" cy="233.2" r="4.4" fill="#2a9d2a"/>
<circle cx="440.7" cy="248.3" r="4.4" fill="#2a9d2a"/>
<circle cx="440.7" cy="255.5" r="4.4" fill="#2a9d2a"/>
<circle cx="455" cy="255.5" r="4.4" fill="#2a9d2a"/>
<circle cx="499.8" cy="255.5" r="4.4" fill="#2a9d2a"/>
<circle cx="440.7" cy="278.1" r="4.4" fill="#2a9d2a"/>
<circle cx="440.7" cy="285" r="4.4" fill="#2a9d2a"/>
<circle cx="440.7" cy="292.4" r="4.4" fill="#2a9d2a"/>
<circle cx="440.7" cy="314.5" r="4.4" fill="#2a9d2a"/>
<circle cx="440.7" cy="322.3" r="4.4" fill="#2a9d2a"/>
<circle cx="492.2" cy="330" r="4.4" fill="#2a9d2a"/>
<circle cx="492.2" cy="344.2" r="4.4" fill="#2a9d2a"/>
<circle cx="492.2" cy="351.6" r="4.4" fill="#2a9d2a"/>
<circle cx="492.2" cy="359.3" r="4.4" fill="#2a9d2a"/>
<circle cx="365.9" cy="418" r="4.4" fill="#2a9d2a"/>
<circle cx="373.6" cy="418" r="4.4" fill="#2a9d2a"/>
<circle cx="381.1" cy="418" r="4.4" fill="#2a9d2a"/>
<circle cx="365.8" cy="440.6" r="4.4" fill="#2a9d2a"/>
<circle cx="373.7" cy="440.6" r="4.4" fill="#2a9d2a"/>
<circle cx="381.4" cy="440.6" r="4.4" fill="#2a9d2a"/>
<rect x="339.3" y="160.7" width="7.9" height="7" fill="#6a6a6a"/>
<rect x="366.5" y="168.2" width="13.1" height="7" fill="#6a6a6a"/>
<rect x="340" y="193" width="7" height="7" fill="#6a6a6a"/>
<rect x="340" y="207.7" width="11" height="7" fill="#6a6a6a"/>
<rect x="448" y="197.3" width="12" height="7" fill="#6a6a6a"/>
<rect x="284.5" y="217" width="10" height="7" fill="#6a6a6a"/>
<rect x="284.3" y="330.2" width="46.7" height="7" fill="#6a6a6a"/>
<rect x="261.2" y="277.2" width="4.2" height="7" fill="#6a6a6a"/>
<rect x="255.5" y="316" width="12.8" height="7" fill="#6a6a6a"/>
<rect x="461" y="238.7" width="12.6" height="7" fill="#6a6a6a"/>
<rect x="484" y="271.5" width="42" height="7" fill="#6a6a6a"/>
<rect x="478.5" y="278.7" width="12.1" height="7" fill="#6a6a6a"/>
<rect x="455" y="271.5" width="16.6" height="7" fill="#6a6a6a"/>
<rect x="455" y="278.8" width="16.6" height="7" fill="#6a6a6a"/>
<rect x="455" y="286" width="13" height="7" fill="#6a6a6a"/>
<rect x="448" y="308" width="7.5" height="7" fill="#6a6a6a"/>
<rect x="448" y="315.5" width="7.5" height="7" fill="#6a6a6a"/>
<rect x="502" y="318.6" width="21.3" height="7" fill="#6a6a6a"/>
<rect x="501.5" y="369.5" width="22.5" height="7" fill="#6a6a6a"/>
<rect x="484.5" y="323.3" width="14.5" height="7" fill="#6a6a6a"/>
<rect x="469.2" y="337.8" width="3.8" height="7" fill="#6a6a6a"/>
<rect x="461.8" y="345.2" width="8.2" height="7" fill="#6a6a6a"/>
<rect x="454.5" y="352.8" width="8.5" height="7" fill="#6a6a6a"/>
<rect x="554" y="259.8" width="9.7" height="7" fill="#6a6a6a"/>
<rect x="621" y="363" width="8.4" height="7" fill="#6a6a6a"/>
<rect x="621" y="385.5" width="8.4" height="7" fill="#6a6a6a"/>
<rect x="567" y="185.8" width="42" height="7" fill="#6a6a6a"/>
<rect x="600.8" y="192.7" width="6.9" height="7" fill="#6a6a6a"/>
<rect x="567" y="215.7" width="42" height="7" fill="#6a6a6a"/>
<rect x="600.8" y="222.6" width="6.9" height="7" fill="#6a6a6a"/>
<rect x="567" y="245.3" width="42" height="7" fill="#6a6a6a"/>
<rect x="600.8" y="252.2" width="6.9" height="7" fill="#6a6a6a"/>
<rect x="567" y="275.3" width="42" height="7" fill="#6a6a6a"/>
<rect x="600.8" y="282.2" width="6.9" height="7" fill="#6a6a6a"/>
<rect x="715.5" y="156.3" width="41.5" height="7" fill="#6a6a6a"/>
<rect x="748.3" y="163" width="7.9" height="7" fill="#6a6a6a"/>
<rect x="715.5" y="193.7" width="41.5" height="7" fill="#6a6a6a"/>
<rect x="748.3" y="200.4" width="7.9" height="7" fill="#6a6a6a"/>
<rect x="715.5" y="237.7" width="41.5" height="7" fill="#6a6a6a"/>
<rect x="748.3" y="244.4" width="7.9" height="7" fill="#6a6a6a"/>
<rect x="715.5" y="274.9" width="41.5" height="7" fill="#6a6a6a"/>
<rect x="748.3" y="281.6" width="7.9" height="7" fill="#6a6a6a"/>
<rect x="715.5" y="312.1" width="41.5" height="7" fill="#6a6a6a"/>
<rect x="748.3" y="318.8" width="7.9" height="7" fill="#6a6a6a"/>
<rect x="715.5" y="356" width="41.5" height="7" fill="#6a6a6a"/>
<rect x="748.3" y="362.7" width="7.9" height="7" fill="#6a6a6a"/>
<rect x="849" y="156.1" width="41.2" height="7" fill="#6a6a6a"/>
<rect x="881.9" y="162.3" width="8.3" height="7" fill="#6a6a6a"/>
<rect x="849" y="193.4" width="41.2" height="7" fill="#6a6a6a"/>
<rect x="881.9" y="199.6" width="8.3" height="7" fill="#6a6a6a"/>
<rect x="849" y="237.6" width="41.2" height="7" fill="#6a6a6a"/>
<rect x="881.9" y="243.8" width="8.3" height="7" fill="#6a6a6a"/>
<rect x="849" y="282.6" width="41.2" height="7" fill="#6a6a6a"/>
<rect x="881.9" y="288.8" width="8.3" height="7" fill="#6a6a6a"/>
<rect x="849" y="319.2" width="41.2" height="7" fill="#6a6a6a"/>
<rect x="881.9" y="325.4" width="8.3" height="7" fill="#6a6a6a"/>
<rect x="849" y="364" width="41.2" height="7" fill="#6a6a6a"/>
<rect x="881.9" y="370.2" width="8.3" height="7" fill="#6a6a6a"/>
<rect x="849" y="407.3" width="41.2" height="7" fill="#6a6a6a"/>
<rect x="881.9" y="413.5" width="8.3" height="7" fill="#6a6a6a"/>
<rect x="669.6" y="256.6" width="14.4" height="7" fill="#6a6a6a"/>
<rect x="804.5" y="286.5" width="12.8" height="7" fill="#6a6a6a"/>
<rect x="929.8" y="294.1" width="13.1" height="7" fill="#6a6a6a"/>
<rect x="380.5" y="359.9" width="16.4" height="7" fill="#6a6a6a"/>
<rect x="372.6" y="375.4" width="14" height="7" fill="#6a6a6a"/>
<rect x="365" y="389.7" width="13.5" height="7" fill="#6a6a6a"/>
<rect x="358.5" y="456.6" width="13.3" height="7" fill="#6a6a6a"/>
<rect x="373.2" y="463.3" width="17" height="7" fill="#6a6a6a"/>
<rect x="380" y="479.5" width="3" height="7" fill="#6a6a6a"/>
</g>
</svg></body></html>
